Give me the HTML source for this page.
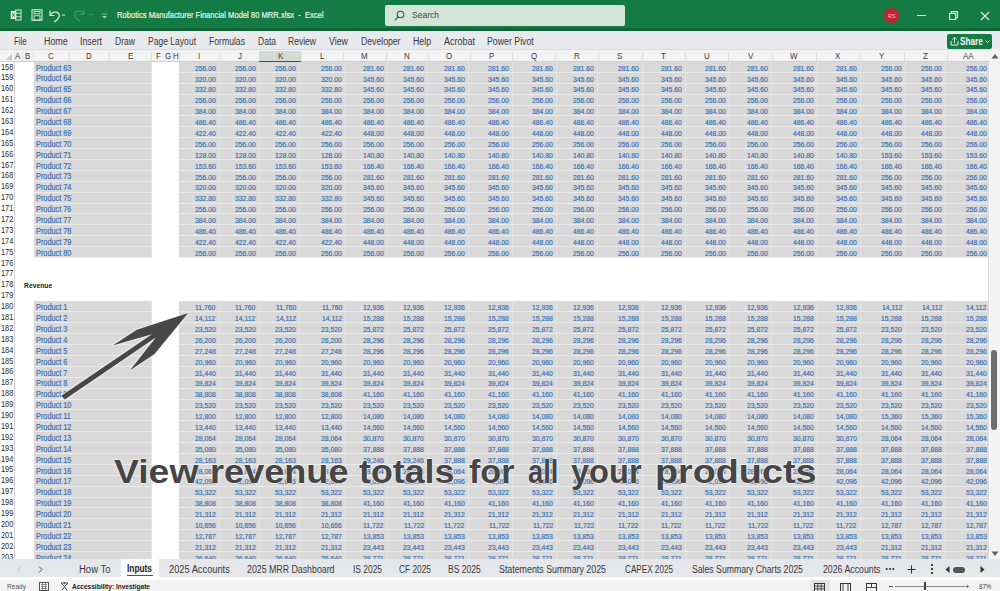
<!DOCTYPE html><html><head><meta charset="utf-8"><title>Excel</title><style>
*{margin:0;padding:0;box-sizing:border-box}
html,body{width:1000px;height:591px;overflow:hidden;background:#fff}
body{position:relative;font-family:"Liberation Sans",sans-serif;color:#222}
.a{position:absolute}
.tx{white-space:nowrap;transform-origin:0 0}
.big{text-shadow:1px 0 0 rgba(255,255,255,.5),-1px 0 0 rgba(255,255,255,.5),0 1px 0 rgba(255,255,255,.5),0 -1px 0 rgba(255,255,255,.5)}
.cv{-webkit-text-stroke:0.18px #386fb5}
#title{left:0;top:0;width:1000px;height:30px;background:#137b43}
#title2{left:0;top:28px;width:1000px;height:2.5px;background:#0f6535}
#ribbon{left:0;top:30.5px;width:1000px;height:18.5px;background:#e9eaee}
.tab{top:36px;font-size:10px;color:#333;white-space:nowrap}
#hdrbg{left:0;top:49px;width:990px;height:12.5px;background:#f3f3f3;border-top:1.5px solid #dcdcdc;border-bottom:1px solid #cfcfcf}
.ch{top:51.5px;height:10px;font-size:8.5px;line-height:10px;text-align:center;color:#444}
.cs{top:52px;width:1px;height:9px;background:#e2e2e2}
.rn{left:0;width:13.5px;font-size:7.8px;text-align:right;color:#333;letter-spacing:-0.2px}
#rhline{left:14px;top:61.5px;width:1px;height:498px;background:#d4d4d4}
.blk{background:#d9d9d9}
.hl{height:1px;background:#ebebeb}
.vl{width:1px;background:#e4e4e4}
.v{font-size:7px;color:#2f68b2;text-align:right;white-space:nowrap;line-height:10.9px;height:10.9px}
.p{font-size:7.4px;color:#2f68b2;white-space:nowrap;line-height:10.9px;height:10.9px}
#tabbar{left:0;top:559px;width:1000px;height:18px;background:#e5e7eb;border-bottom:3px solid #e9e9ea}
#status{left:0;top:580px;width:1000px;height:11px;background:#f3f3f3}
.st{top:562.5px;font-size:10px;color:#333;white-space:nowrap}
#vscroll{left:990px;top:49px;width:10px;height:510px;background:#f3f3f3}
#vline{left:988px;top:61.5px;width:1px;height:498px;background:#dcdcdc}
</style></head><body>
<div id="title" class="a"></div><div id="title2" class="a"></div>
<svg class="a" style="left:10px;top:9px" width="12" height="12" viewBox="0 0 12 12"><rect x="5.6" y="1" width="5.4" height="10" fill="none" stroke="#d2efdc" stroke-width="1"/><line x1="5.6" y1="4.3" x2="11" y2="4.3" stroke="#d2efdc" stroke-width="0.9"/><line x1="5.6" y1="7.7" x2="11" y2="7.7" stroke="#d2efdc" stroke-width="0.9"/><rect x="0.7" y="2" width="5.6" height="8" fill="#d8f2e0"/><path d="M2.3 4.3 L4.7 7.7 M4.7 4.3 L2.3 7.7" stroke="#2a5a3c" stroke-width="0.9"/></svg>
<svg class="a" style="left:30.5px;top:9px" width="12" height="12" viewBox="0 0 12 12"><rect x="1" y="0.8" width="10" height="10.4" fill="none" stroke="#d2efdc" stroke-width="1.1"/><rect x="3" y="2.6" width="6" height="2.2" fill="none" stroke="#d2efdc" stroke-width="0.9"/><rect x="3" y="6.8" width="6" height="4.4" fill="none" stroke="#d2efdc" stroke-width="0.9"/><rect x="4.6" y="7.8" width="2.2" height="2" fill="#2a5a3c"/></svg>
<svg class="a" style="left:49px;top:8.5px" width="16" height="14" viewBox="0 0 16 14"><path d="M1 1.5 L1 6.5 L5.5 6.5" fill="none" stroke="#d2efdc" stroke-width="1.2"/><path d="M1.3 6.2 C3 2.5 8.5 2 10 5 C11.2 7.5 9 11 5 13" fill="none" stroke="#d2efdc" stroke-width="1.3"/><line x1="13" y1="6" x2="16" y2="6" stroke="#d2efdc" stroke-width="1.1"/></svg>
<svg class="a" style="left:73px;top:8px" width="22" height="14" viewBox="0 0 22 14"><path d="M11 1.5 L11 6.5 L6.5 6.5" fill="none" stroke="#3f9863" stroke-width="1.2"/><path d="M10.7 6.2 C9 2.5 3.5 2 2 5 C0.8 7.5 3 11 7 13" fill="none" stroke="#3f9863" stroke-width="1.3"/><line x1="16" y1="6.5" x2="20" y2="6.5" stroke="#3f9863" stroke-width="1.1"/></svg>
<svg class="a" style="left:101px;top:12.5px" width="7" height="6" viewBox="0 0 7 6"><line x1="0.5" y1="1" x2="6.5" y2="1" stroke="#6fc08e" stroke-width="1"/><path d="M1 3 L6 3 L3.5 5.5 Z" fill="#8fdcac"/></svg>
<div class="a tx " style="left:117.20px;top:10.27px;font-size:9.20px;line-height:10.28px;color:#e6f6ec;transform:scaleX(0.8272);white-space:pre;-webkit-text-stroke:0.2px #e6f6ec">Robotics Manufacturer Financial Model 80 MRR.xlsx  -  Excel</div>
<div class="a" style="left:385px;top:5px;width:240px;height:20.5px;background:#d3e4d9;border-radius:2px"></div>
<svg class="a" style="left:394px;top:10px" width="11" height="11" viewBox="0 0 11 11"><circle cx="6.5" cy="4.5" r="3.3" fill="none" stroke="#3d5d48" stroke-width="1.1"/><line x1="4.2" y1="6.8" x2="1" y2="10" stroke="#3d5d48" stroke-width="1.2"/></svg>
<div class="a tx " style="left:412.00px;top:9.90px;font-size:9.50px;line-height:10.61px;color:#3b4a40;transform:scaleX(0.8966)">Search</div>
<div class="a" style="left:883.5px;top:7.5px;width:15.5px;height:15.5px;border-radius:50%;background:#c6212f"></div>
<div class="a tx " style="left:887.50px;top:13.02px;font-size:5.50px;line-height:6.14px;color:#f0c8cc;transform:scaleX(0.9810)">RS</div>
<div class="a" style="left:916.5px;top:14.6px;width:9.5px;height:1px;background:#e4f0e8"></div>
<svg class="a" style="left:949px;top:11px" width="9" height="9" viewBox="0 0 9 9"><rect x="0.6" y="2.4" width="6" height="6" fill="none" stroke="#e4f0e8" stroke-width="1.1"/><path d="M2.4 2.4 L2.4 0.6 L8.4 0.6 L8.4 6.6 L6.6 6.6" fill="none" stroke="#e4f0e8" stroke-width="1.1"/></svg>
<svg class="a" style="left:980px;top:10.5px" width="10" height="10" viewBox="0 0 10 10"><path d="M1 1 L9 9 M9 1 L1 9" stroke="#e4f0e8" stroke-width="1.2"/></svg>
<div id="ribbon" class="a"></div>
<div class="a tx " style="left:14.20px;top:35.65px;font-size:10.00px;line-height:11.17px;color:#383838;transform:scaleX(0.7826)">File</div>
<div class="a tx " style="left:43.60px;top:35.65px;font-size:10.00px;line-height:11.17px;color:#383838;transform:scaleX(0.8876)">Home</div>
<div class="a tx " style="left:80.00px;top:35.65px;font-size:10.00px;line-height:11.17px;color:#383838;transform:scaleX(0.8800)">Insert</div>
<div class="a tx " style="left:115.00px;top:35.65px;font-size:10.00px;line-height:11.17px;color:#383838;transform:scaleX(0.8565)">Draw</div>
<div class="a tx " style="left:148.00px;top:35.65px;font-size:10.00px;line-height:11.17px;color:#383838;transform:scaleX(0.8549)">Page Layout</div>
<div class="a tx " style="left:209.00px;top:35.65px;font-size:10.00px;line-height:11.17px;color:#383838;transform:scaleX(0.8633)">Formulas</div>
<div class="a tx " style="left:257.50px;top:35.65px;font-size:10.00px;line-height:11.17px;color:#383838;transform:scaleX(0.8511)">Data</div>
<div class="a tx " style="left:288.00px;top:35.65px;font-size:10.00px;line-height:11.17px;color:#383838;transform:scaleX(0.8537)">Review</div>
<div class="a tx " style="left:328.70px;top:35.65px;font-size:10.00px;line-height:11.17px;color:#383838;transform:scaleX(0.8791)">View</div>
<div class="a tx " style="left:360.50px;top:35.65px;font-size:10.00px;line-height:11.17px;color:#383838;transform:scaleX(0.8662)">Developer</div>
<div class="a tx " style="left:412.80px;top:35.65px;font-size:10.00px;line-height:11.17px;color:#383838;transform:scaleX(0.8759)">Help</div>
<div class="a tx " style="left:443.70px;top:35.65px;font-size:10.00px;line-height:11.17px;color:#383838;transform:scaleX(0.8970)">Acrobat</div>
<div class="a tx " style="left:487.00px;top:35.65px;font-size:10.00px;line-height:11.17px;color:#383838;transform:scaleX(0.8772)">Power Pivot</div>
<div class="a" style="left:947px;top:33.5px;width:45px;height:15px;background:#137b43;border-radius:2px"></div>
<svg class="a" style="left:950px;top:36px" width="9" height="10" viewBox="0 0 9 10"><path d="M1 5 L1 9 L8 9 L8 5" fill="none" stroke="#e8f3ec" stroke-width="1"/><path d="M4.5 7 L4.5 1.5 M2.5 3.5 L4.5 1.2 L6.5 3.5" fill="none" stroke="#e8f3ec" stroke-width="1"/></svg>
<div class="a tx " style="left:960.00px;top:35.75px;font-size:10.00px;line-height:11.17px;color:#f2f8f4;transform:scaleX(0.8240);font-weight:600">Share</div>
<svg class="a" style="left:985px;top:40px" width="5" height="3" viewBox="0 0 5 3"><path d="M0.5 0.5 L2.5 2.5 L4.5 0.5" fill="none" stroke="#e8f3ec" stroke-width="0.9"/></svg>
<div id="hdrbg" class="a"></div>
<svg class="a" style="left:5px;top:53px" width="8" height="8" viewBox="0 0 8 8"><path d="M7 1 L7 7 L1 7 Z" fill="#c8c8c8"/></svg>
<div class="a cs" style="left:21.5px"></div>
<div class="a tx " style="left:15.33px;top:51.70px;font-size:8.40px;line-height:9.38px;color:#3c3c3c;transform:scaleX(0.9500)">A</div>
<div class="a cs" style="left:32.5px"></div>
<div class="a tx " style="left:24.85px;top:51.70px;font-size:8.40px;line-height:9.38px;color:#3c3c3c;transform:scaleX(0.9500)">B</div>
<div class="a cs" style="left:68.5px"></div>
<div class="a tx " style="left:48.13px;top:51.70px;font-size:8.40px;line-height:9.38px;color:#3c3c3c;transform:scaleX(0.9500)">C</div>
<div class="a cs" style="left:109px"></div>
<div class="a tx " style="left:86.38px;top:51.70px;font-size:8.40px;line-height:9.38px;color:#3c3c3c;transform:scaleX(0.9500)">D</div>
<div class="a cs" style="left:150.5px"></div>
<div class="a tx " style="left:127.60px;top:51.70px;font-size:8.40px;line-height:9.38px;color:#3c3c3c;transform:scaleX(0.9500)">E</div>
<div class="a cs" style="left:164.5px"></div>
<div class="a tx " style="left:155.57px;top:51.70px;font-size:8.40px;line-height:9.38px;color:#3c3c3c;transform:scaleX(0.9500)">F</div>
<div class="a cs" style="left:171.5px"></div>
<div class="a tx " style="left:165.39px;top:51.70px;font-size:8.40px;line-height:9.38px;color:#3c3c3c;transform:scaleX(0.9500)">G</div>
<div class="a cs" style="left:178.5px"></div>
<div class="a tx " style="left:172.63px;top:51.70px;font-size:8.40px;line-height:9.38px;color:#3c3c3c;transform:scaleX(0.9500)">H</div>
<div class="a cs" style="left:219px"></div>
<div class="a tx " style="left:198.13px;top:51.70px;font-size:8.40px;line-height:9.38px;color:#3c3c3c;transform:scaleX(0.9500)">I</div>
<div class="a cs" style="left:259.5px"></div>
<div class="a tx " style="left:237.75px;top:51.70px;font-size:8.40px;line-height:9.38px;color:#3c3c3c;transform:scaleX(0.9500)">J</div>
<div class="a" style="left:258.5px;top:50.5px;width:42.5px;height:11px;background:#d2dbd4"></div>
<div class="a" style="left:258.5px;top:60.6px;width:42.5px;height:1.4px;background:#2b5a3f"></div>
<div class="a cs" style="left:300.5px"></div>
<div class="a tx " style="left:277.85px;top:51.70px;font-size:8.40px;line-height:9.38px;color:#3c3c3c;transform:scaleX(0.9500)">K</div>
<div class="a cs" style="left:343px"></div>
<div class="a tx " style="left:320.04px;top:51.70px;font-size:8.40px;line-height:9.38px;color:#3c3c3c;transform:scaleX(0.9500)">L</div>
<div class="a cs" style="left:385.5px"></div>
<div class="a tx " style="left:361.42px;top:51.70px;font-size:8.40px;line-height:9.38px;color:#3c3c3c;transform:scaleX(0.9500)">M</div>
<div class="a cs" style="left:427.5px"></div>
<div class="a tx " style="left:404.13px;top:51.70px;font-size:8.40px;line-height:9.38px;color:#3c3c3c;transform:scaleX(0.9500)">N</div>
<div class="a cs" style="left:469.5px"></div>
<div class="a tx " style="left:445.89px;top:51.70px;font-size:8.40px;line-height:9.38px;color:#3c3c3c;transform:scaleX(0.9500)">O</div>
<div class="a cs" style="left:512px"></div>
<div class="a tx " style="left:488.60px;top:51.70px;font-size:8.40px;line-height:9.38px;color:#3c3c3c;transform:scaleX(0.9500)">P</div>
<div class="a cs" style="left:554.5px"></div>
<div class="a tx " style="left:530.64px;top:51.70px;font-size:8.40px;line-height:9.38px;color:#3c3c3c;transform:scaleX(0.9500)">Q</div>
<div class="a cs" style="left:597.5px"></div>
<div class="a tx " style="left:573.63px;top:51.70px;font-size:8.40px;line-height:9.38px;color:#3c3c3c;transform:scaleX(0.9500)">R</div>
<div class="a cs" style="left:641.5px"></div>
<div class="a tx " style="left:617.35px;top:51.70px;font-size:8.40px;line-height:9.38px;color:#3c3c3c;transform:scaleX(0.9500)">S</div>
<div class="a cs" style="left:685px"></div>
<div class="a tx " style="left:661.32px;top:51.70px;font-size:8.40px;line-height:9.38px;color:#3c3c3c;transform:scaleX(0.9500)">T</div>
<div class="a cs" style="left:728px"></div>
<div class="a tx " style="left:704.13px;top:51.70px;font-size:8.40px;line-height:9.38px;color:#3c3c3c;transform:scaleX(0.9500)">U</div>
<div class="a cs" style="left:771.5px"></div>
<div class="a tx " style="left:747.60px;top:51.70px;font-size:8.40px;line-height:9.38px;color:#3c3c3c;transform:scaleX(0.9500)">V</div>
<div class="a cs" style="left:815.5px"></div>
<div class="a tx " style="left:790.23px;top:51.70px;font-size:8.40px;line-height:9.38px;color:#3c3c3c;transform:scaleX(0.9500)">W</div>
<div class="a cs" style="left:859.5px"></div>
<div class="a tx " style="left:835.35px;top:51.70px;font-size:8.40px;line-height:9.38px;color:#3c3c3c;transform:scaleX(0.9500)">X</div>
<div class="a cs" style="left:903.5px"></div>
<div class="a tx " style="left:879.35px;top:51.70px;font-size:8.40px;line-height:9.38px;color:#3c3c3c;transform:scaleX(0.9500)">Y</div>
<div class="a cs" style="left:946.5px"></div>
<div class="a tx " style="left:923.07px;top:51.70px;font-size:8.40px;line-height:9.38px;color:#3c3c3c;transform:scaleX(0.9500)">Z</div>
<div class="a cs" style="left:989.5px"></div>
<div class="a tx " style="left:963.17px;top:51.70px;font-size:8.40px;line-height:9.38px;color:#3c3c3c;transform:scaleX(0.9500)">AA</div>
<div class="a cs" style="left:14px"></div>
<div id="vscroll" class="a"></div><div id="vline" class="a"></div>
<svg class="a" style="left:991px;top:53px" width="8" height="6" viewBox="0 0 8 6"><path d="M0.5 5.5 L4 1 L7.5 5.5 Z" fill="#606060"/></svg>
<svg class="a" style="left:991px;top:551px" width="8" height="6" viewBox="0 0 8 6"><path d="M0.5 0.5 L4 5 L7.5 0.5 Z" fill="#606060"/></svg>
<div class="a" style="left:991px;top:350px;width:6px;height:80px;border-radius:3px;background:#6e6e6e"></div>
<div id="rhline" class="a"></div>
<div class="a tx " style="left:0.85px;top:62.52px;font-size:8.60px;line-height:9.61px;color:#2a2a2a;transform:scaleX(0.8600)">158</div>
<div class="a tx " style="left:0.85px;top:73.41px;font-size:8.60px;line-height:9.61px;color:#2a2a2a;transform:scaleX(0.8600)">159</div>
<div class="a tx " style="left:0.85px;top:84.30px;font-size:8.60px;line-height:9.61px;color:#2a2a2a;transform:scaleX(0.8600)">160</div>
<div class="a tx " style="left:0.85px;top:95.19px;font-size:8.60px;line-height:9.61px;color:#2a2a2a;transform:scaleX(0.8600)">161</div>
<div class="a tx " style="left:0.85px;top:106.08px;font-size:8.60px;line-height:9.61px;color:#2a2a2a;transform:scaleX(0.8600)">162</div>
<div class="a tx " style="left:0.85px;top:116.97px;font-size:8.60px;line-height:9.61px;color:#2a2a2a;transform:scaleX(0.8600)">163</div>
<div class="a tx " style="left:0.85px;top:127.86px;font-size:8.60px;line-height:9.61px;color:#2a2a2a;transform:scaleX(0.8600)">164</div>
<div class="a tx " style="left:0.85px;top:138.75px;font-size:8.60px;line-height:9.61px;color:#2a2a2a;transform:scaleX(0.8600)">165</div>
<div class="a tx " style="left:0.85px;top:149.64px;font-size:8.60px;line-height:9.61px;color:#2a2a2a;transform:scaleX(0.8600)">166</div>
<div class="a tx " style="left:0.85px;top:160.53px;font-size:8.60px;line-height:9.61px;color:#2a2a2a;transform:scaleX(0.8600)">167</div>
<div class="a tx " style="left:0.85px;top:171.42px;font-size:8.60px;line-height:9.61px;color:#2a2a2a;transform:scaleX(0.8600)">168</div>
<div class="a tx " style="left:0.85px;top:182.31px;font-size:8.60px;line-height:9.61px;color:#2a2a2a;transform:scaleX(0.8600)">169</div>
<div class="a tx " style="left:0.85px;top:193.20px;font-size:8.60px;line-height:9.61px;color:#2a2a2a;transform:scaleX(0.8600)">170</div>
<div class="a tx " style="left:0.85px;top:204.09px;font-size:8.60px;line-height:9.61px;color:#2a2a2a;transform:scaleX(0.8600)">171</div>
<div class="a tx " style="left:0.85px;top:214.98px;font-size:8.60px;line-height:9.61px;color:#2a2a2a;transform:scaleX(0.8600)">172</div>
<div class="a tx " style="left:0.85px;top:225.87px;font-size:8.60px;line-height:9.61px;color:#2a2a2a;transform:scaleX(0.8600)">173</div>
<div class="a tx " style="left:0.85px;top:236.76px;font-size:8.60px;line-height:9.61px;color:#2a2a2a;transform:scaleX(0.8600)">174</div>
<div class="a tx " style="left:0.85px;top:247.65px;font-size:8.60px;line-height:9.61px;color:#2a2a2a;transform:scaleX(0.8600)">175</div>
<div class="a tx " style="left:0.85px;top:258.54px;font-size:8.60px;line-height:9.61px;color:#2a2a2a;transform:scaleX(0.8600)">176</div>
<div class="a tx " style="left:0.85px;top:269.43px;font-size:8.60px;line-height:9.61px;color:#2a2a2a;transform:scaleX(0.8600)">177</div>
<div class="a tx " style="left:0.85px;top:280.32px;font-size:8.60px;line-height:9.61px;color:#2a2a2a;transform:scaleX(0.8600)">178</div>
<div class="a tx " style="left:0.85px;top:291.21px;font-size:8.60px;line-height:9.61px;color:#2a2a2a;transform:scaleX(0.8600)">179</div>
<div class="a tx " style="left:0.85px;top:302.10px;font-size:8.60px;line-height:9.61px;color:#2a2a2a;transform:scaleX(0.8600)">180</div>
<div class="a tx " style="left:0.85px;top:312.99px;font-size:8.60px;line-height:9.61px;color:#2a2a2a;transform:scaleX(0.8600)">181</div>
<div class="a tx " style="left:0.85px;top:323.88px;font-size:8.60px;line-height:9.61px;color:#2a2a2a;transform:scaleX(0.8600)">182</div>
<div class="a tx " style="left:0.85px;top:334.77px;font-size:8.60px;line-height:9.61px;color:#2a2a2a;transform:scaleX(0.8600)">183</div>
<div class="a tx " style="left:0.85px;top:345.66px;font-size:8.60px;line-height:9.61px;color:#2a2a2a;transform:scaleX(0.8600)">184</div>
<div class="a tx " style="left:0.85px;top:356.55px;font-size:8.60px;line-height:9.61px;color:#2a2a2a;transform:scaleX(0.8600)">185</div>
<div class="a tx " style="left:0.85px;top:367.44px;font-size:8.60px;line-height:9.61px;color:#2a2a2a;transform:scaleX(0.8600)">186</div>
<div class="a tx " style="left:0.85px;top:378.33px;font-size:8.60px;line-height:9.61px;color:#2a2a2a;transform:scaleX(0.8600)">187</div>
<div class="a tx " style="left:0.85px;top:389.22px;font-size:8.60px;line-height:9.61px;color:#2a2a2a;transform:scaleX(0.8600)">188</div>
<div class="a tx " style="left:0.85px;top:400.11px;font-size:8.60px;line-height:9.61px;color:#2a2a2a;transform:scaleX(0.8600)">189</div>
<div class="a tx " style="left:0.85px;top:411.00px;font-size:8.60px;line-height:9.61px;color:#2a2a2a;transform:scaleX(0.8600)">190</div>
<div class="a tx " style="left:0.85px;top:421.89px;font-size:8.60px;line-height:9.61px;color:#2a2a2a;transform:scaleX(0.8600)">191</div>
<div class="a tx " style="left:0.85px;top:432.78px;font-size:8.60px;line-height:9.61px;color:#2a2a2a;transform:scaleX(0.8600)">192</div>
<div class="a tx " style="left:0.85px;top:443.67px;font-size:8.60px;line-height:9.61px;color:#2a2a2a;transform:scaleX(0.8600)">193</div>
<div class="a tx " style="left:0.85px;top:454.56px;font-size:8.60px;line-height:9.61px;color:#2a2a2a;transform:scaleX(0.8600)">194</div>
<div class="a tx " style="left:0.85px;top:465.45px;font-size:8.60px;line-height:9.61px;color:#2a2a2a;transform:scaleX(0.8600)">195</div>
<div class="a tx " style="left:0.85px;top:476.34px;font-size:8.60px;line-height:9.61px;color:#2a2a2a;transform:scaleX(0.8600)">196</div>
<div class="a tx " style="left:0.85px;top:487.23px;font-size:8.60px;line-height:9.61px;color:#2a2a2a;transform:scaleX(0.8600)">197</div>
<div class="a tx " style="left:0.85px;top:498.12px;font-size:8.60px;line-height:9.61px;color:#2a2a2a;transform:scaleX(0.8600)">198</div>
<div class="a tx " style="left:0.85px;top:509.01px;font-size:8.60px;line-height:9.61px;color:#2a2a2a;transform:scaleX(0.8600)">199</div>
<div class="a tx " style="left:0.85px;top:519.90px;font-size:8.60px;line-height:9.61px;color:#2a2a2a;transform:scaleX(0.8600)">200</div>
<div class="a tx " style="left:0.85px;top:530.79px;font-size:8.60px;line-height:9.61px;color:#2a2a2a;transform:scaleX(0.8600)">201</div>
<div class="a tx " style="left:0.85px;top:541.68px;font-size:8.60px;line-height:9.61px;color:#2a2a2a;transform:scaleX(0.8600)">202</div>
<div class="a tx " style="left:0.85px;top:552.57px;font-size:8.60px;line-height:9.61px;color:#2a2a2a;transform:scaleX(0.8600)">203</div>
<div class="a blk" style="left:34px;top:61.5px;width:116.6px;height:196.02px"></div>
<div class="a hl" style="left:34px;top:71.89px;width:116.6px"></div>
<div class="a hl" style="left:34px;top:82.78px;width:116.6px"></div>
<div class="a hl" style="left:34px;top:93.67px;width:116.6px"></div>
<div class="a hl" style="left:34px;top:104.56px;width:116.6px"></div>
<div class="a hl" style="left:34px;top:115.45px;width:116.6px"></div>
<div class="a hl" style="left:34px;top:126.34px;width:116.6px"></div>
<div class="a hl" style="left:34px;top:137.23px;width:116.6px"></div>
<div class="a hl" style="left:34px;top:148.12px;width:116.6px"></div>
<div class="a hl" style="left:34px;top:159.01px;width:116.6px"></div>
<div class="a hl" style="left:34px;top:169.9px;width:116.6px"></div>
<div class="a hl" style="left:34px;top:180.79px;width:116.6px"></div>
<div class="a hl" style="left:34px;top:191.68px;width:116.6px"></div>
<div class="a hl" style="left:34px;top:202.57px;width:116.6px"></div>
<div class="a hl" style="left:34px;top:213.46px;width:116.6px"></div>
<div class="a hl" style="left:34px;top:224.35px;width:116.6px"></div>
<div class="a hl" style="left:34px;top:235.24px;width:116.6px"></div>
<div class="a hl" style="left:34px;top:246.13px;width:116.6px"></div>
<div class="a hl" style="left:34px;top:257.02px;width:116.6px"></div>
<div class="a vl" style="left:150.5px;top:61.5px;height:196.02px"></div>
<div class="a blk" style="left:179px;top:61.5px;width:809px;height:196.02px"></div>
<div class="a hl" style="left:179px;top:71.89px;width:809px"></div>
<div class="a hl" style="left:179px;top:82.78px;width:809px"></div>
<div class="a hl" style="left:179px;top:93.67px;width:809px"></div>
<div class="a hl" style="left:179px;top:104.56px;width:809px"></div>
<div class="a hl" style="left:179px;top:115.45px;width:809px"></div>
<div class="a hl" style="left:179px;top:126.34px;width:809px"></div>
<div class="a hl" style="left:179px;top:137.23px;width:809px"></div>
<div class="a hl" style="left:179px;top:148.12px;width:809px"></div>
<div class="a hl" style="left:179px;top:159.01px;width:809px"></div>
<div class="a hl" style="left:179px;top:169.9px;width:809px"></div>
<div class="a hl" style="left:179px;top:180.79px;width:809px"></div>
<div class="a hl" style="left:179px;top:191.68px;width:809px"></div>
<div class="a hl" style="left:179px;top:202.57px;width:809px"></div>
<div class="a hl" style="left:179px;top:213.46px;width:809px"></div>
<div class="a hl" style="left:179px;top:224.35px;width:809px"></div>
<div class="a hl" style="left:179px;top:235.24px;width:809px"></div>
<div class="a hl" style="left:179px;top:246.13px;width:809px"></div>
<div class="a hl" style="left:179px;top:257.02px;width:809px"></div>
<div class="a vl" style="left:218.5px;top:61.5px;height:196.02px"></div>
<div class="a vl" style="left:258.8px;top:61.5px;height:196.02px"></div>
<div class="a vl" style="left:299.3px;top:61.5px;height:196.02px"></div>
<div class="a vl" style="left:345px;top:61.5px;height:196.02px"></div>
<div class="a vl" style="left:386.7px;top:61.5px;height:196.02px"></div>
<div class="a vl" style="left:427.4px;top:61.5px;height:196.02px"></div>
<div class="a vl" style="left:467.8px;top:61.5px;height:196.02px"></div>
<div class="a vl" style="left:512.2px;top:61.5px;height:196.02px"></div>
<div class="a vl" style="left:556px;top:61.5px;height:196.02px"></div>
<div class="a vl" style="left:597px;top:61.5px;height:196.02px"></div>
<div class="a vl" style="left:641.8px;top:61.5px;height:196.02px"></div>
<div class="a vl" style="left:684.5px;top:61.5px;height:196.02px"></div>
<div class="a vl" style="left:728.8px;top:61.5px;height:196.02px"></div>
<div class="a vl" style="left:771px;top:61.5px;height:196.02px"></div>
<div class="a vl" style="left:816.8px;top:61.5px;height:196.02px"></div>
<div class="a vl" style="left:859.6px;top:61.5px;height:196.02px"></div>
<div class="a vl" style="left:905px;top:61.5px;height:196.02px"></div>
<div class="a vl" style="left:945.3px;top:61.5px;height:196.02px"></div>
<div class="a blk" style="left:34px;top:301.08px;width:116.6px;height:261.36px"></div>
<div class="a hl" style="left:34px;top:311.47px;width:116.6px"></div>
<div class="a hl" style="left:34px;top:322.36px;width:116.6px"></div>
<div class="a hl" style="left:34px;top:333.25px;width:116.6px"></div>
<div class="a hl" style="left:34px;top:344.14px;width:116.6px"></div>
<div class="a hl" style="left:34px;top:355.03px;width:116.6px"></div>
<div class="a hl" style="left:34px;top:365.92px;width:116.6px"></div>
<div class="a hl" style="left:34px;top:376.81px;width:116.6px"></div>
<div class="a hl" style="left:34px;top:387.7px;width:116.6px"></div>
<div class="a hl" style="left:34px;top:398.59px;width:116.6px"></div>
<div class="a hl" style="left:34px;top:409.48px;width:116.6px"></div>
<div class="a hl" style="left:34px;top:420.37px;width:116.6px"></div>
<div class="a hl" style="left:34px;top:431.26px;width:116.6px"></div>
<div class="a hl" style="left:34px;top:442.15px;width:116.6px"></div>
<div class="a hl" style="left:34px;top:453.04px;width:116.6px"></div>
<div class="a hl" style="left:34px;top:463.93px;width:116.6px"></div>
<div class="a hl" style="left:34px;top:474.82px;width:116.6px"></div>
<div class="a hl" style="left:34px;top:485.71px;width:116.6px"></div>
<div class="a hl" style="left:34px;top:496.6px;width:116.6px"></div>
<div class="a hl" style="left:34px;top:507.49px;width:116.6px"></div>
<div class="a hl" style="left:34px;top:518.38px;width:116.6px"></div>
<div class="a hl" style="left:34px;top:529.27px;width:116.6px"></div>
<div class="a hl" style="left:34px;top:540.16px;width:116.6px"></div>
<div class="a hl" style="left:34px;top:551.05px;width:116.6px"></div>
<div class="a hl" style="left:34px;top:561.94px;width:116.6px"></div>
<div class="a vl" style="left:150.5px;top:301.08px;height:261.36px"></div>
<div class="a blk" style="left:179px;top:301.08px;width:809px;height:261.36px"></div>
<div class="a hl" style="left:179px;top:311.47px;width:809px"></div>
<div class="a hl" style="left:179px;top:322.36px;width:809px"></div>
<div class="a hl" style="left:179px;top:333.25px;width:809px"></div>
<div class="a hl" style="left:179px;top:344.14px;width:809px"></div>
<div class="a hl" style="left:179px;top:355.03px;width:809px"></div>
<div class="a hl" style="left:179px;top:365.92px;width:809px"></div>
<div class="a hl" style="left:179px;top:376.81px;width:809px"></div>
<div class="a hl" style="left:179px;top:387.7px;width:809px"></div>
<div class="a hl" style="left:179px;top:398.59px;width:809px"></div>
<div class="a hl" style="left:179px;top:409.48px;width:809px"></div>
<div class="a hl" style="left:179px;top:420.37px;width:809px"></div>
<div class="a hl" style="left:179px;top:431.26px;width:809px"></div>
<div class="a hl" style="left:179px;top:442.15px;width:809px"></div>
<div class="a hl" style="left:179px;top:453.04px;width:809px"></div>
<div class="a hl" style="left:179px;top:463.93px;width:809px"></div>
<div class="a hl" style="left:179px;top:474.82px;width:809px"></div>
<div class="a hl" style="left:179px;top:485.71px;width:809px"></div>
<div class="a hl" style="left:179px;top:496.6px;width:809px"></div>
<div class="a hl" style="left:179px;top:507.49px;width:809px"></div>
<div class="a hl" style="left:179px;top:518.38px;width:809px"></div>
<div class="a hl" style="left:179px;top:529.27px;width:809px"></div>
<div class="a hl" style="left:179px;top:540.16px;width:809px"></div>
<div class="a hl" style="left:179px;top:551.05px;width:809px"></div>
<div class="a hl" style="left:179px;top:561.94px;width:809px"></div>
<div class="a vl" style="left:218.5px;top:301.08px;height:261.36px"></div>
<div class="a vl" style="left:258.8px;top:301.08px;height:261.36px"></div>
<div class="a vl" style="left:299.3px;top:301.08px;height:261.36px"></div>
<div class="a vl" style="left:345px;top:301.08px;height:261.36px"></div>
<div class="a vl" style="left:386.7px;top:301.08px;height:261.36px"></div>
<div class="a vl" style="left:427.4px;top:301.08px;height:261.36px"></div>
<div class="a vl" style="left:467.8px;top:301.08px;height:261.36px"></div>
<div class="a vl" style="left:512.2px;top:301.08px;height:261.36px"></div>
<div class="a vl" style="left:556px;top:301.08px;height:261.36px"></div>
<div class="a vl" style="left:597px;top:301.08px;height:261.36px"></div>
<div class="a vl" style="left:641.8px;top:301.08px;height:261.36px"></div>
<div class="a vl" style="left:684.5px;top:301.08px;height:261.36px"></div>
<div class="a vl" style="left:728.8px;top:301.08px;height:261.36px"></div>
<div class="a vl" style="left:771px;top:301.08px;height:261.36px"></div>
<div class="a vl" style="left:816.8px;top:301.08px;height:261.36px"></div>
<div class="a vl" style="left:859.6px;top:301.08px;height:261.36px"></div>
<div class="a vl" style="left:905px;top:301.08px;height:261.36px"></div>
<div class="a vl" style="left:945.3px;top:301.08px;height:261.36px"></div>
<div class="a tx cv" style="left:36.00px;top:63.58px;font-size:8.20px;line-height:9.16px;color:#386fb5;transform:scaleX(0.8944)">Product 63</div>
<div class="a tx cv" style="left:194.56px;top:63.67px;font-size:8.10px;line-height:9.05px;color:#386fb5;transform:scaleX(0.8450)">256.00</div>
<div class="a tx cv" style="left:234.86px;top:63.67px;font-size:8.10px;line-height:9.05px;color:#386fb5;transform:scaleX(0.8450)">256.00</div>
<div class="a tx cv" style="left:275.36px;top:63.67px;font-size:8.10px;line-height:9.05px;color:#386fb5;transform:scaleX(0.8450)">256.00</div>
<div class="a tx cv" style="left:321.06px;top:63.67px;font-size:8.10px;line-height:9.05px;color:#386fb5;transform:scaleX(0.8450)">256.00</div>
<div class="a tx cv" style="left:362.76px;top:63.67px;font-size:8.10px;line-height:9.05px;color:#386fb5;transform:scaleX(0.8450)">281.60</div>
<div class="a tx cv" style="left:403.46px;top:63.67px;font-size:8.10px;line-height:9.05px;color:#386fb5;transform:scaleX(0.8450)">281.60</div>
<div class="a tx cv" style="left:443.86px;top:63.67px;font-size:8.10px;line-height:9.05px;color:#386fb5;transform:scaleX(0.8450)">281.60</div>
<div class="a tx cv" style="left:488.26px;top:63.67px;font-size:8.10px;line-height:9.05px;color:#386fb5;transform:scaleX(0.8450)">281.60</div>
<div class="a tx cv" style="left:532.06px;top:63.67px;font-size:8.10px;line-height:9.05px;color:#386fb5;transform:scaleX(0.8450)">281.60</div>
<div class="a tx cv" style="left:573.06px;top:63.67px;font-size:8.10px;line-height:9.05px;color:#386fb5;transform:scaleX(0.8450)">281.60</div>
<div class="a tx cv" style="left:617.86px;top:63.67px;font-size:8.10px;line-height:9.05px;color:#386fb5;transform:scaleX(0.8450)">281.60</div>
<div class="a tx cv" style="left:660.56px;top:63.67px;font-size:8.10px;line-height:9.05px;color:#386fb5;transform:scaleX(0.8450)">281.60</div>
<div class="a tx cv" style="left:704.86px;top:63.67px;font-size:8.10px;line-height:9.05px;color:#386fb5;transform:scaleX(0.8450)">281.60</div>
<div class="a tx cv" style="left:747.06px;top:63.67px;font-size:8.10px;line-height:9.05px;color:#386fb5;transform:scaleX(0.8450)">281.60</div>
<div class="a tx cv" style="left:792.86px;top:63.67px;font-size:8.10px;line-height:9.05px;color:#386fb5;transform:scaleX(0.8450)">281.60</div>
<div class="a tx cv" style="left:835.66px;top:63.67px;font-size:8.10px;line-height:9.05px;color:#386fb5;transform:scaleX(0.8450)">281.60</div>
<div class="a tx cv" style="left:881.06px;top:63.67px;font-size:8.10px;line-height:9.05px;color:#386fb5;transform:scaleX(0.8450)">256.00</div>
<div class="a tx cv" style="left:921.36px;top:63.67px;font-size:8.10px;line-height:9.05px;color:#386fb5;transform:scaleX(0.8450)">256.00</div>
<div class="a tx cv" style="left:965.86px;top:63.67px;font-size:8.10px;line-height:9.05px;color:#386fb5;transform:scaleX(0.8450)">256.00</div>
<div class="a tx cv" style="left:36.00px;top:74.47px;font-size:8.20px;line-height:9.16px;color:#386fb5;transform:scaleX(0.8944)">Product 64</div>
<div class="a tx cv" style="left:194.56px;top:74.56px;font-size:8.10px;line-height:9.05px;color:#386fb5;transform:scaleX(0.8450)">320.00</div>
<div class="a tx cv" style="left:234.86px;top:74.56px;font-size:8.10px;line-height:9.05px;color:#386fb5;transform:scaleX(0.8450)">320.00</div>
<div class="a tx cv" style="left:275.36px;top:74.56px;font-size:8.10px;line-height:9.05px;color:#386fb5;transform:scaleX(0.8450)">320.00</div>
<div class="a tx cv" style="left:321.06px;top:74.56px;font-size:8.10px;line-height:9.05px;color:#386fb5;transform:scaleX(0.8450)">320.00</div>
<div class="a tx cv" style="left:362.76px;top:74.56px;font-size:8.10px;line-height:9.05px;color:#386fb5;transform:scaleX(0.8450)">345.60</div>
<div class="a tx cv" style="left:403.46px;top:74.56px;font-size:8.10px;line-height:9.05px;color:#386fb5;transform:scaleX(0.8450)">345.60</div>
<div class="a tx cv" style="left:443.86px;top:74.56px;font-size:8.10px;line-height:9.05px;color:#386fb5;transform:scaleX(0.8450)">345.60</div>
<div class="a tx cv" style="left:488.26px;top:74.56px;font-size:8.10px;line-height:9.05px;color:#386fb5;transform:scaleX(0.8450)">345.60</div>
<div class="a tx cv" style="left:532.06px;top:74.56px;font-size:8.10px;line-height:9.05px;color:#386fb5;transform:scaleX(0.8450)">345.60</div>
<div class="a tx cv" style="left:573.06px;top:74.56px;font-size:8.10px;line-height:9.05px;color:#386fb5;transform:scaleX(0.8450)">345.60</div>
<div class="a tx cv" style="left:617.86px;top:74.56px;font-size:8.10px;line-height:9.05px;color:#386fb5;transform:scaleX(0.8450)">345.60</div>
<div class="a tx cv" style="left:660.56px;top:74.56px;font-size:8.10px;line-height:9.05px;color:#386fb5;transform:scaleX(0.8450)">345.60</div>
<div class="a tx cv" style="left:704.86px;top:74.56px;font-size:8.10px;line-height:9.05px;color:#386fb5;transform:scaleX(0.8450)">345.60</div>
<div class="a tx cv" style="left:747.06px;top:74.56px;font-size:8.10px;line-height:9.05px;color:#386fb5;transform:scaleX(0.8450)">345.60</div>
<div class="a tx cv" style="left:792.86px;top:74.56px;font-size:8.10px;line-height:9.05px;color:#386fb5;transform:scaleX(0.8450)">345.60</div>
<div class="a tx cv" style="left:835.66px;top:74.56px;font-size:8.10px;line-height:9.05px;color:#386fb5;transform:scaleX(0.8450)">345.60</div>
<div class="a tx cv" style="left:881.06px;top:74.56px;font-size:8.10px;line-height:9.05px;color:#386fb5;transform:scaleX(0.8450)">345.60</div>
<div class="a tx cv" style="left:921.36px;top:74.56px;font-size:8.10px;line-height:9.05px;color:#386fb5;transform:scaleX(0.8450)">345.60</div>
<div class="a tx cv" style="left:965.86px;top:74.56px;font-size:8.10px;line-height:9.05px;color:#386fb5;transform:scaleX(0.8450)">345.60</div>
<div class="a tx cv" style="left:36.00px;top:85.36px;font-size:8.20px;line-height:9.16px;color:#386fb5;transform:scaleX(0.8944)">Product 65</div>
<div class="a tx cv" style="left:194.56px;top:85.45px;font-size:8.10px;line-height:9.05px;color:#386fb5;transform:scaleX(0.8450)">332.80</div>
<div class="a tx cv" style="left:234.86px;top:85.45px;font-size:8.10px;line-height:9.05px;color:#386fb5;transform:scaleX(0.8450)">332.80</div>
<div class="a tx cv" style="left:275.36px;top:85.45px;font-size:8.10px;line-height:9.05px;color:#386fb5;transform:scaleX(0.8450)">332.80</div>
<div class="a tx cv" style="left:321.06px;top:85.45px;font-size:8.10px;line-height:9.05px;color:#386fb5;transform:scaleX(0.8450)">332.80</div>
<div class="a tx cv" style="left:362.76px;top:85.45px;font-size:8.10px;line-height:9.05px;color:#386fb5;transform:scaleX(0.8450)">345.60</div>
<div class="a tx cv" style="left:403.46px;top:85.45px;font-size:8.10px;line-height:9.05px;color:#386fb5;transform:scaleX(0.8450)">345.60</div>
<div class="a tx cv" style="left:443.86px;top:85.45px;font-size:8.10px;line-height:9.05px;color:#386fb5;transform:scaleX(0.8450)">345.60</div>
<div class="a tx cv" style="left:488.26px;top:85.45px;font-size:8.10px;line-height:9.05px;color:#386fb5;transform:scaleX(0.8450)">345.60</div>
<div class="a tx cv" style="left:532.06px;top:85.45px;font-size:8.10px;line-height:9.05px;color:#386fb5;transform:scaleX(0.8450)">345.60</div>
<div class="a tx cv" style="left:573.06px;top:85.45px;font-size:8.10px;line-height:9.05px;color:#386fb5;transform:scaleX(0.8450)">345.60</div>
<div class="a tx cv" style="left:617.86px;top:85.45px;font-size:8.10px;line-height:9.05px;color:#386fb5;transform:scaleX(0.8450)">345.60</div>
<div class="a tx cv" style="left:660.56px;top:85.45px;font-size:8.10px;line-height:9.05px;color:#386fb5;transform:scaleX(0.8450)">345.60</div>
<div class="a tx cv" style="left:704.86px;top:85.45px;font-size:8.10px;line-height:9.05px;color:#386fb5;transform:scaleX(0.8450)">345.60</div>
<div class="a tx cv" style="left:747.06px;top:85.45px;font-size:8.10px;line-height:9.05px;color:#386fb5;transform:scaleX(0.8450)">345.60</div>
<div class="a tx cv" style="left:792.86px;top:85.45px;font-size:8.10px;line-height:9.05px;color:#386fb5;transform:scaleX(0.8450)">345.60</div>
<div class="a tx cv" style="left:835.66px;top:85.45px;font-size:8.10px;line-height:9.05px;color:#386fb5;transform:scaleX(0.8450)">345.60</div>
<div class="a tx cv" style="left:881.06px;top:85.45px;font-size:8.10px;line-height:9.05px;color:#386fb5;transform:scaleX(0.8450)">345.60</div>
<div class="a tx cv" style="left:921.36px;top:85.45px;font-size:8.10px;line-height:9.05px;color:#386fb5;transform:scaleX(0.8450)">345.60</div>
<div class="a tx cv" style="left:965.86px;top:85.45px;font-size:8.10px;line-height:9.05px;color:#386fb5;transform:scaleX(0.8450)">345.60</div>
<div class="a tx cv" style="left:36.00px;top:96.25px;font-size:8.20px;line-height:9.16px;color:#386fb5;transform:scaleX(0.8944)">Product 66</div>
<div class="a tx cv" style="left:194.56px;top:96.34px;font-size:8.10px;line-height:9.05px;color:#386fb5;transform:scaleX(0.8450)">256.00</div>
<div class="a tx cv" style="left:234.86px;top:96.34px;font-size:8.10px;line-height:9.05px;color:#386fb5;transform:scaleX(0.8450)">256.00</div>
<div class="a tx cv" style="left:275.36px;top:96.34px;font-size:8.10px;line-height:9.05px;color:#386fb5;transform:scaleX(0.8450)">256.00</div>
<div class="a tx cv" style="left:321.06px;top:96.34px;font-size:8.10px;line-height:9.05px;color:#386fb5;transform:scaleX(0.8450)">256.00</div>
<div class="a tx cv" style="left:362.76px;top:96.34px;font-size:8.10px;line-height:9.05px;color:#386fb5;transform:scaleX(0.8450)">256.00</div>
<div class="a tx cv" style="left:403.46px;top:96.34px;font-size:8.10px;line-height:9.05px;color:#386fb5;transform:scaleX(0.8450)">256.00</div>
<div class="a tx cv" style="left:443.86px;top:96.34px;font-size:8.10px;line-height:9.05px;color:#386fb5;transform:scaleX(0.8450)">256.00</div>
<div class="a tx cv" style="left:488.26px;top:96.34px;font-size:8.10px;line-height:9.05px;color:#386fb5;transform:scaleX(0.8450)">256.00</div>
<div class="a tx cv" style="left:532.06px;top:96.34px;font-size:8.10px;line-height:9.05px;color:#386fb5;transform:scaleX(0.8450)">256.00</div>
<div class="a tx cv" style="left:573.06px;top:96.34px;font-size:8.10px;line-height:9.05px;color:#386fb5;transform:scaleX(0.8450)">256.00</div>
<div class="a tx cv" style="left:617.86px;top:96.34px;font-size:8.10px;line-height:9.05px;color:#386fb5;transform:scaleX(0.8450)">256.00</div>
<div class="a tx cv" style="left:660.56px;top:96.34px;font-size:8.10px;line-height:9.05px;color:#386fb5;transform:scaleX(0.8450)">256.00</div>
<div class="a tx cv" style="left:704.86px;top:96.34px;font-size:8.10px;line-height:9.05px;color:#386fb5;transform:scaleX(0.8450)">256.00</div>
<div class="a tx cv" style="left:747.06px;top:96.34px;font-size:8.10px;line-height:9.05px;color:#386fb5;transform:scaleX(0.8450)">256.00</div>
<div class="a tx cv" style="left:792.86px;top:96.34px;font-size:8.10px;line-height:9.05px;color:#386fb5;transform:scaleX(0.8450)">256.00</div>
<div class="a tx cv" style="left:835.66px;top:96.34px;font-size:8.10px;line-height:9.05px;color:#386fb5;transform:scaleX(0.8450)">256.00</div>
<div class="a tx cv" style="left:881.06px;top:96.34px;font-size:8.10px;line-height:9.05px;color:#386fb5;transform:scaleX(0.8450)">256.00</div>
<div class="a tx cv" style="left:921.36px;top:96.34px;font-size:8.10px;line-height:9.05px;color:#386fb5;transform:scaleX(0.8450)">256.00</div>
<div class="a tx cv" style="left:965.86px;top:96.34px;font-size:8.10px;line-height:9.05px;color:#386fb5;transform:scaleX(0.8450)">256.00</div>
<div class="a tx cv" style="left:36.00px;top:107.14px;font-size:8.20px;line-height:9.16px;color:#386fb5;transform:scaleX(0.8944)">Product 67</div>
<div class="a tx cv" style="left:194.56px;top:107.23px;font-size:8.10px;line-height:9.05px;color:#386fb5;transform:scaleX(0.8450)">384.00</div>
<div class="a tx cv" style="left:234.86px;top:107.23px;font-size:8.10px;line-height:9.05px;color:#386fb5;transform:scaleX(0.8450)">384.00</div>
<div class="a tx cv" style="left:275.36px;top:107.23px;font-size:8.10px;line-height:9.05px;color:#386fb5;transform:scaleX(0.8450)">384.00</div>
<div class="a tx cv" style="left:321.06px;top:107.23px;font-size:8.10px;line-height:9.05px;color:#386fb5;transform:scaleX(0.8450)">384.00</div>
<div class="a tx cv" style="left:362.76px;top:107.23px;font-size:8.10px;line-height:9.05px;color:#386fb5;transform:scaleX(0.8450)">384.00</div>
<div class="a tx cv" style="left:403.46px;top:107.23px;font-size:8.10px;line-height:9.05px;color:#386fb5;transform:scaleX(0.8450)">384.00</div>
<div class="a tx cv" style="left:443.86px;top:107.23px;font-size:8.10px;line-height:9.05px;color:#386fb5;transform:scaleX(0.8450)">384.00</div>
<div class="a tx cv" style="left:488.26px;top:107.23px;font-size:8.10px;line-height:9.05px;color:#386fb5;transform:scaleX(0.8450)">384.00</div>
<div class="a tx cv" style="left:532.06px;top:107.23px;font-size:8.10px;line-height:9.05px;color:#386fb5;transform:scaleX(0.8450)">384.00</div>
<div class="a tx cv" style="left:573.06px;top:107.23px;font-size:8.10px;line-height:9.05px;color:#386fb5;transform:scaleX(0.8450)">384.00</div>
<div class="a tx cv" style="left:617.86px;top:107.23px;font-size:8.10px;line-height:9.05px;color:#386fb5;transform:scaleX(0.8450)">384.00</div>
<div class="a tx cv" style="left:660.56px;top:107.23px;font-size:8.10px;line-height:9.05px;color:#386fb5;transform:scaleX(0.8450)">384.00</div>
<div class="a tx cv" style="left:704.86px;top:107.23px;font-size:8.10px;line-height:9.05px;color:#386fb5;transform:scaleX(0.8450)">384.00</div>
<div class="a tx cv" style="left:747.06px;top:107.23px;font-size:8.10px;line-height:9.05px;color:#386fb5;transform:scaleX(0.8450)">384.00</div>
<div class="a tx cv" style="left:792.86px;top:107.23px;font-size:8.10px;line-height:9.05px;color:#386fb5;transform:scaleX(0.8450)">384.00</div>
<div class="a tx cv" style="left:835.66px;top:107.23px;font-size:8.10px;line-height:9.05px;color:#386fb5;transform:scaleX(0.8450)">384.00</div>
<div class="a tx cv" style="left:881.06px;top:107.23px;font-size:8.10px;line-height:9.05px;color:#386fb5;transform:scaleX(0.8450)">384.00</div>
<div class="a tx cv" style="left:921.36px;top:107.23px;font-size:8.10px;line-height:9.05px;color:#386fb5;transform:scaleX(0.8450)">384.00</div>
<div class="a tx cv" style="left:965.86px;top:107.23px;font-size:8.10px;line-height:9.05px;color:#386fb5;transform:scaleX(0.8450)">384.00</div>
<div class="a tx cv" style="left:36.00px;top:118.03px;font-size:8.20px;line-height:9.16px;color:#386fb5;transform:scaleX(0.8944)">Product 68</div>
<div class="a tx cv" style="left:194.56px;top:118.12px;font-size:8.10px;line-height:9.05px;color:#386fb5;transform:scaleX(0.8450)">486.40</div>
<div class="a tx cv" style="left:234.86px;top:118.12px;font-size:8.10px;line-height:9.05px;color:#386fb5;transform:scaleX(0.8450)">486.40</div>
<div class="a tx cv" style="left:275.36px;top:118.12px;font-size:8.10px;line-height:9.05px;color:#386fb5;transform:scaleX(0.8450)">486.40</div>
<div class="a tx cv" style="left:321.06px;top:118.12px;font-size:8.10px;line-height:9.05px;color:#386fb5;transform:scaleX(0.8450)">486.40</div>
<div class="a tx cv" style="left:362.76px;top:118.12px;font-size:8.10px;line-height:9.05px;color:#386fb5;transform:scaleX(0.8450)">486.40</div>
<div class="a tx cv" style="left:403.46px;top:118.12px;font-size:8.10px;line-height:9.05px;color:#386fb5;transform:scaleX(0.8450)">486.40</div>
<div class="a tx cv" style="left:443.86px;top:118.12px;font-size:8.10px;line-height:9.05px;color:#386fb5;transform:scaleX(0.8450)">486.40</div>
<div class="a tx cv" style="left:488.26px;top:118.12px;font-size:8.10px;line-height:9.05px;color:#386fb5;transform:scaleX(0.8450)">486.40</div>
<div class="a tx cv" style="left:532.06px;top:118.12px;font-size:8.10px;line-height:9.05px;color:#386fb5;transform:scaleX(0.8450)">486.40</div>
<div class="a tx cv" style="left:573.06px;top:118.12px;font-size:8.10px;line-height:9.05px;color:#386fb5;transform:scaleX(0.8450)">486.40</div>
<div class="a tx cv" style="left:617.86px;top:118.12px;font-size:8.10px;line-height:9.05px;color:#386fb5;transform:scaleX(0.8450)">486.40</div>
<div class="a tx cv" style="left:660.56px;top:118.12px;font-size:8.10px;line-height:9.05px;color:#386fb5;transform:scaleX(0.8450)">486.40</div>
<div class="a tx cv" style="left:704.86px;top:118.12px;font-size:8.10px;line-height:9.05px;color:#386fb5;transform:scaleX(0.8450)">486.40</div>
<div class="a tx cv" style="left:747.06px;top:118.12px;font-size:8.10px;line-height:9.05px;color:#386fb5;transform:scaleX(0.8450)">486.40</div>
<div class="a tx cv" style="left:792.86px;top:118.12px;font-size:8.10px;line-height:9.05px;color:#386fb5;transform:scaleX(0.8450)">486.40</div>
<div class="a tx cv" style="left:835.66px;top:118.12px;font-size:8.10px;line-height:9.05px;color:#386fb5;transform:scaleX(0.8450)">486.40</div>
<div class="a tx cv" style="left:881.06px;top:118.12px;font-size:8.10px;line-height:9.05px;color:#386fb5;transform:scaleX(0.8450)">486.40</div>
<div class="a tx cv" style="left:921.36px;top:118.12px;font-size:8.10px;line-height:9.05px;color:#386fb5;transform:scaleX(0.8450)">486.40</div>
<div class="a tx cv" style="left:965.86px;top:118.12px;font-size:8.10px;line-height:9.05px;color:#386fb5;transform:scaleX(0.8450)">486.40</div>
<div class="a tx cv" style="left:36.00px;top:128.92px;font-size:8.20px;line-height:9.16px;color:#386fb5;transform:scaleX(0.8944)">Product 69</div>
<div class="a tx cv" style="left:194.56px;top:129.01px;font-size:8.10px;line-height:9.05px;color:#386fb5;transform:scaleX(0.8450)">422.40</div>
<div class="a tx cv" style="left:234.86px;top:129.01px;font-size:8.10px;line-height:9.05px;color:#386fb5;transform:scaleX(0.8450)">422.40</div>
<div class="a tx cv" style="left:275.36px;top:129.01px;font-size:8.10px;line-height:9.05px;color:#386fb5;transform:scaleX(0.8450)">422.40</div>
<div class="a tx cv" style="left:321.06px;top:129.01px;font-size:8.10px;line-height:9.05px;color:#386fb5;transform:scaleX(0.8450)">422.40</div>
<div class="a tx cv" style="left:362.76px;top:129.01px;font-size:8.10px;line-height:9.05px;color:#386fb5;transform:scaleX(0.8450)">448.00</div>
<div class="a tx cv" style="left:403.46px;top:129.01px;font-size:8.10px;line-height:9.05px;color:#386fb5;transform:scaleX(0.8450)">448.00</div>
<div class="a tx cv" style="left:443.86px;top:129.01px;font-size:8.10px;line-height:9.05px;color:#386fb5;transform:scaleX(0.8450)">448.00</div>
<div class="a tx cv" style="left:488.26px;top:129.01px;font-size:8.10px;line-height:9.05px;color:#386fb5;transform:scaleX(0.8450)">448.00</div>
<div class="a tx cv" style="left:532.06px;top:129.01px;font-size:8.10px;line-height:9.05px;color:#386fb5;transform:scaleX(0.8450)">448.00</div>
<div class="a tx cv" style="left:573.06px;top:129.01px;font-size:8.10px;line-height:9.05px;color:#386fb5;transform:scaleX(0.8450)">448.00</div>
<div class="a tx cv" style="left:617.86px;top:129.01px;font-size:8.10px;line-height:9.05px;color:#386fb5;transform:scaleX(0.8450)">448.00</div>
<div class="a tx cv" style="left:660.56px;top:129.01px;font-size:8.10px;line-height:9.05px;color:#386fb5;transform:scaleX(0.8450)">448.00</div>
<div class="a tx cv" style="left:704.86px;top:129.01px;font-size:8.10px;line-height:9.05px;color:#386fb5;transform:scaleX(0.8450)">448.00</div>
<div class="a tx cv" style="left:747.06px;top:129.01px;font-size:8.10px;line-height:9.05px;color:#386fb5;transform:scaleX(0.8450)">448.00</div>
<div class="a tx cv" style="left:792.86px;top:129.01px;font-size:8.10px;line-height:9.05px;color:#386fb5;transform:scaleX(0.8450)">448.00</div>
<div class="a tx cv" style="left:835.66px;top:129.01px;font-size:8.10px;line-height:9.05px;color:#386fb5;transform:scaleX(0.8450)">448.00</div>
<div class="a tx cv" style="left:881.06px;top:129.01px;font-size:8.10px;line-height:9.05px;color:#386fb5;transform:scaleX(0.8450)">448.00</div>
<div class="a tx cv" style="left:921.36px;top:129.01px;font-size:8.10px;line-height:9.05px;color:#386fb5;transform:scaleX(0.8450)">448.00</div>
<div class="a tx cv" style="left:965.86px;top:129.01px;font-size:8.10px;line-height:9.05px;color:#386fb5;transform:scaleX(0.8450)">448.00</div>
<div class="a tx cv" style="left:36.00px;top:139.81px;font-size:8.20px;line-height:9.16px;color:#386fb5;transform:scaleX(0.8944)">Product 70</div>
<div class="a tx cv" style="left:194.56px;top:139.90px;font-size:8.10px;line-height:9.05px;color:#386fb5;transform:scaleX(0.8450)">256.00</div>
<div class="a tx cv" style="left:234.86px;top:139.90px;font-size:8.10px;line-height:9.05px;color:#386fb5;transform:scaleX(0.8450)">256.00</div>
<div class="a tx cv" style="left:275.36px;top:139.90px;font-size:8.10px;line-height:9.05px;color:#386fb5;transform:scaleX(0.8450)">256.00</div>
<div class="a tx cv" style="left:321.06px;top:139.90px;font-size:8.10px;line-height:9.05px;color:#386fb5;transform:scaleX(0.8450)">256.00</div>
<div class="a tx cv" style="left:362.76px;top:139.90px;font-size:8.10px;line-height:9.05px;color:#386fb5;transform:scaleX(0.8450)">256.00</div>
<div class="a tx cv" style="left:403.46px;top:139.90px;font-size:8.10px;line-height:9.05px;color:#386fb5;transform:scaleX(0.8450)">256.00</div>
<div class="a tx cv" style="left:443.86px;top:139.90px;font-size:8.10px;line-height:9.05px;color:#386fb5;transform:scaleX(0.8450)">256.00</div>
<div class="a tx cv" style="left:488.26px;top:139.90px;font-size:8.10px;line-height:9.05px;color:#386fb5;transform:scaleX(0.8450)">256.00</div>
<div class="a tx cv" style="left:532.06px;top:139.90px;font-size:8.10px;line-height:9.05px;color:#386fb5;transform:scaleX(0.8450)">256.00</div>
<div class="a tx cv" style="left:573.06px;top:139.90px;font-size:8.10px;line-height:9.05px;color:#386fb5;transform:scaleX(0.8450)">256.00</div>
<div class="a tx cv" style="left:617.86px;top:139.90px;font-size:8.10px;line-height:9.05px;color:#386fb5;transform:scaleX(0.8450)">256.00</div>
<div class="a tx cv" style="left:660.56px;top:139.90px;font-size:8.10px;line-height:9.05px;color:#386fb5;transform:scaleX(0.8450)">256.00</div>
<div class="a tx cv" style="left:704.86px;top:139.90px;font-size:8.10px;line-height:9.05px;color:#386fb5;transform:scaleX(0.8450)">256.00</div>
<div class="a tx cv" style="left:747.06px;top:139.90px;font-size:8.10px;line-height:9.05px;color:#386fb5;transform:scaleX(0.8450)">256.00</div>
<div class="a tx cv" style="left:792.86px;top:139.90px;font-size:8.10px;line-height:9.05px;color:#386fb5;transform:scaleX(0.8450)">256.00</div>
<div class="a tx cv" style="left:835.66px;top:139.90px;font-size:8.10px;line-height:9.05px;color:#386fb5;transform:scaleX(0.8450)">256.00</div>
<div class="a tx cv" style="left:881.06px;top:139.90px;font-size:8.10px;line-height:9.05px;color:#386fb5;transform:scaleX(0.8450)">256.00</div>
<div class="a tx cv" style="left:921.36px;top:139.90px;font-size:8.10px;line-height:9.05px;color:#386fb5;transform:scaleX(0.8450)">256.00</div>
<div class="a tx cv" style="left:965.86px;top:139.90px;font-size:8.10px;line-height:9.05px;color:#386fb5;transform:scaleX(0.8450)">256.00</div>
<div class="a tx cv" style="left:36.00px;top:150.70px;font-size:8.20px;line-height:9.16px;color:#386fb5;transform:scaleX(0.8944)">Product 71</div>
<div class="a tx cv" style="left:194.56px;top:150.79px;font-size:8.10px;line-height:9.05px;color:#386fb5;transform:scaleX(0.8450)">128.00</div>
<div class="a tx cv" style="left:234.86px;top:150.79px;font-size:8.10px;line-height:9.05px;color:#386fb5;transform:scaleX(0.8450)">128.00</div>
<div class="a tx cv" style="left:275.36px;top:150.79px;font-size:8.10px;line-height:9.05px;color:#386fb5;transform:scaleX(0.8450)">128.00</div>
<div class="a tx cv" style="left:321.06px;top:150.79px;font-size:8.10px;line-height:9.05px;color:#386fb5;transform:scaleX(0.8450)">128.00</div>
<div class="a tx cv" style="left:362.76px;top:150.79px;font-size:8.10px;line-height:9.05px;color:#386fb5;transform:scaleX(0.8450)">140.80</div>
<div class="a tx cv" style="left:403.46px;top:150.79px;font-size:8.10px;line-height:9.05px;color:#386fb5;transform:scaleX(0.8450)">140.80</div>
<div class="a tx cv" style="left:443.86px;top:150.79px;font-size:8.10px;line-height:9.05px;color:#386fb5;transform:scaleX(0.8450)">140.80</div>
<div class="a tx cv" style="left:488.26px;top:150.79px;font-size:8.10px;line-height:9.05px;color:#386fb5;transform:scaleX(0.8450)">140.80</div>
<div class="a tx cv" style="left:532.06px;top:150.79px;font-size:8.10px;line-height:9.05px;color:#386fb5;transform:scaleX(0.8450)">140.80</div>
<div class="a tx cv" style="left:573.06px;top:150.79px;font-size:8.10px;line-height:9.05px;color:#386fb5;transform:scaleX(0.8450)">140.80</div>
<div class="a tx cv" style="left:617.86px;top:150.79px;font-size:8.10px;line-height:9.05px;color:#386fb5;transform:scaleX(0.8450)">140.80</div>
<div class="a tx cv" style="left:660.56px;top:150.79px;font-size:8.10px;line-height:9.05px;color:#386fb5;transform:scaleX(0.8450)">140.80</div>
<div class="a tx cv" style="left:704.86px;top:150.79px;font-size:8.10px;line-height:9.05px;color:#386fb5;transform:scaleX(0.8450)">140.80</div>
<div class="a tx cv" style="left:747.06px;top:150.79px;font-size:8.10px;line-height:9.05px;color:#386fb5;transform:scaleX(0.8450)">140.80</div>
<div class="a tx cv" style="left:792.86px;top:150.79px;font-size:8.10px;line-height:9.05px;color:#386fb5;transform:scaleX(0.8450)">140.80</div>
<div class="a tx cv" style="left:835.66px;top:150.79px;font-size:8.10px;line-height:9.05px;color:#386fb5;transform:scaleX(0.8450)">140.80</div>
<div class="a tx cv" style="left:881.06px;top:150.79px;font-size:8.10px;line-height:9.05px;color:#386fb5;transform:scaleX(0.8450)">153.60</div>
<div class="a tx cv" style="left:921.36px;top:150.79px;font-size:8.10px;line-height:9.05px;color:#386fb5;transform:scaleX(0.8450)">153.60</div>
<div class="a tx cv" style="left:965.86px;top:150.79px;font-size:8.10px;line-height:9.05px;color:#386fb5;transform:scaleX(0.8450)">153.60</div>
<div class="a tx cv" style="left:36.00px;top:161.59px;font-size:8.20px;line-height:9.16px;color:#386fb5;transform:scaleX(0.8944)">Product 72</div>
<div class="a tx cv" style="left:194.56px;top:161.68px;font-size:8.10px;line-height:9.05px;color:#386fb5;transform:scaleX(0.8450)">153.60</div>
<div class="a tx cv" style="left:234.86px;top:161.68px;font-size:8.10px;line-height:9.05px;color:#386fb5;transform:scaleX(0.8450)">153.60</div>
<div class="a tx cv" style="left:275.36px;top:161.68px;font-size:8.10px;line-height:9.05px;color:#386fb5;transform:scaleX(0.8450)">153.60</div>
<div class="a tx cv" style="left:321.06px;top:161.68px;font-size:8.10px;line-height:9.05px;color:#386fb5;transform:scaleX(0.8450)">153.60</div>
<div class="a tx cv" style="left:362.76px;top:161.68px;font-size:8.10px;line-height:9.05px;color:#386fb5;transform:scaleX(0.8450)">166.40</div>
<div class="a tx cv" style="left:403.46px;top:161.68px;font-size:8.10px;line-height:9.05px;color:#386fb5;transform:scaleX(0.8450)">166.40</div>
<div class="a tx cv" style="left:443.86px;top:161.68px;font-size:8.10px;line-height:9.05px;color:#386fb5;transform:scaleX(0.8450)">166.40</div>
<div class="a tx cv" style="left:488.26px;top:161.68px;font-size:8.10px;line-height:9.05px;color:#386fb5;transform:scaleX(0.8450)">166.40</div>
<div class="a tx cv" style="left:532.06px;top:161.68px;font-size:8.10px;line-height:9.05px;color:#386fb5;transform:scaleX(0.8450)">166.40</div>
<div class="a tx cv" style="left:573.06px;top:161.68px;font-size:8.10px;line-height:9.05px;color:#386fb5;transform:scaleX(0.8450)">166.40</div>
<div class="a tx cv" style="left:617.86px;top:161.68px;font-size:8.10px;line-height:9.05px;color:#386fb5;transform:scaleX(0.8450)">166.40</div>
<div class="a tx cv" style="left:660.56px;top:161.68px;font-size:8.10px;line-height:9.05px;color:#386fb5;transform:scaleX(0.8450)">166.40</div>
<div class="a tx cv" style="left:704.86px;top:161.68px;font-size:8.10px;line-height:9.05px;color:#386fb5;transform:scaleX(0.8450)">166.40</div>
<div class="a tx cv" style="left:747.06px;top:161.68px;font-size:8.10px;line-height:9.05px;color:#386fb5;transform:scaleX(0.8450)">166.40</div>
<div class="a tx cv" style="left:792.86px;top:161.68px;font-size:8.10px;line-height:9.05px;color:#386fb5;transform:scaleX(0.8450)">166.40</div>
<div class="a tx cv" style="left:835.66px;top:161.68px;font-size:8.10px;line-height:9.05px;color:#386fb5;transform:scaleX(0.8450)">166.40</div>
<div class="a tx cv" style="left:881.06px;top:161.68px;font-size:8.10px;line-height:9.05px;color:#386fb5;transform:scaleX(0.8450)">166.40</div>
<div class="a tx cv" style="left:921.36px;top:161.68px;font-size:8.10px;line-height:9.05px;color:#386fb5;transform:scaleX(0.8450)">166.40</div>
<div class="a tx cv" style="left:965.86px;top:161.68px;font-size:8.10px;line-height:9.05px;color:#386fb5;transform:scaleX(0.8450)">166.40</div>
<div class="a tx cv" style="left:36.00px;top:172.48px;font-size:8.20px;line-height:9.16px;color:#386fb5;transform:scaleX(0.8944)">Product 73</div>
<div class="a tx cv" style="left:194.56px;top:172.57px;font-size:8.10px;line-height:9.05px;color:#386fb5;transform:scaleX(0.8450)">256.00</div>
<div class="a tx cv" style="left:234.86px;top:172.57px;font-size:8.10px;line-height:9.05px;color:#386fb5;transform:scaleX(0.8450)">256.00</div>
<div class="a tx cv" style="left:275.36px;top:172.57px;font-size:8.10px;line-height:9.05px;color:#386fb5;transform:scaleX(0.8450)">256.00</div>
<div class="a tx cv" style="left:321.06px;top:172.57px;font-size:8.10px;line-height:9.05px;color:#386fb5;transform:scaleX(0.8450)">256.00</div>
<div class="a tx cv" style="left:362.76px;top:172.57px;font-size:8.10px;line-height:9.05px;color:#386fb5;transform:scaleX(0.8450)">281.60</div>
<div class="a tx cv" style="left:403.46px;top:172.57px;font-size:8.10px;line-height:9.05px;color:#386fb5;transform:scaleX(0.8450)">281.60</div>
<div class="a tx cv" style="left:443.86px;top:172.57px;font-size:8.10px;line-height:9.05px;color:#386fb5;transform:scaleX(0.8450)">281.60</div>
<div class="a tx cv" style="left:488.26px;top:172.57px;font-size:8.10px;line-height:9.05px;color:#386fb5;transform:scaleX(0.8450)">281.60</div>
<div class="a tx cv" style="left:532.06px;top:172.57px;font-size:8.10px;line-height:9.05px;color:#386fb5;transform:scaleX(0.8450)">281.60</div>
<div class="a tx cv" style="left:573.06px;top:172.57px;font-size:8.10px;line-height:9.05px;color:#386fb5;transform:scaleX(0.8450)">281.60</div>
<div class="a tx cv" style="left:617.86px;top:172.57px;font-size:8.10px;line-height:9.05px;color:#386fb5;transform:scaleX(0.8450)">281.60</div>
<div class="a tx cv" style="left:660.56px;top:172.57px;font-size:8.10px;line-height:9.05px;color:#386fb5;transform:scaleX(0.8450)">281.60</div>
<div class="a tx cv" style="left:704.86px;top:172.57px;font-size:8.10px;line-height:9.05px;color:#386fb5;transform:scaleX(0.8450)">281.60</div>
<div class="a tx cv" style="left:747.06px;top:172.57px;font-size:8.10px;line-height:9.05px;color:#386fb5;transform:scaleX(0.8450)">281.60</div>
<div class="a tx cv" style="left:792.86px;top:172.57px;font-size:8.10px;line-height:9.05px;color:#386fb5;transform:scaleX(0.8450)">281.60</div>
<div class="a tx cv" style="left:835.66px;top:172.57px;font-size:8.10px;line-height:9.05px;color:#386fb5;transform:scaleX(0.8450)">281.60</div>
<div class="a tx cv" style="left:881.06px;top:172.57px;font-size:8.10px;line-height:9.05px;color:#386fb5;transform:scaleX(0.8450)">256.00</div>
<div class="a tx cv" style="left:921.36px;top:172.57px;font-size:8.10px;line-height:9.05px;color:#386fb5;transform:scaleX(0.8450)">256.00</div>
<div class="a tx cv" style="left:965.86px;top:172.57px;font-size:8.10px;line-height:9.05px;color:#386fb5;transform:scaleX(0.8450)">256.00</div>
<div class="a tx cv" style="left:36.00px;top:183.37px;font-size:8.20px;line-height:9.16px;color:#386fb5;transform:scaleX(0.8944)">Product 74</div>
<div class="a tx cv" style="left:194.56px;top:183.46px;font-size:8.10px;line-height:9.05px;color:#386fb5;transform:scaleX(0.8450)">320.00</div>
<div class="a tx cv" style="left:234.86px;top:183.46px;font-size:8.10px;line-height:9.05px;color:#386fb5;transform:scaleX(0.8450)">320.00</div>
<div class="a tx cv" style="left:275.36px;top:183.46px;font-size:8.10px;line-height:9.05px;color:#386fb5;transform:scaleX(0.8450)">320.00</div>
<div class="a tx cv" style="left:321.06px;top:183.46px;font-size:8.10px;line-height:9.05px;color:#386fb5;transform:scaleX(0.8450)">320.00</div>
<div class="a tx cv" style="left:362.76px;top:183.46px;font-size:8.10px;line-height:9.05px;color:#386fb5;transform:scaleX(0.8450)">345.60</div>
<div class="a tx cv" style="left:403.46px;top:183.46px;font-size:8.10px;line-height:9.05px;color:#386fb5;transform:scaleX(0.8450)">345.60</div>
<div class="a tx cv" style="left:443.86px;top:183.46px;font-size:8.10px;line-height:9.05px;color:#386fb5;transform:scaleX(0.8450)">345.60</div>
<div class="a tx cv" style="left:488.26px;top:183.46px;font-size:8.10px;line-height:9.05px;color:#386fb5;transform:scaleX(0.8450)">345.60</div>
<div class="a tx cv" style="left:532.06px;top:183.46px;font-size:8.10px;line-height:9.05px;color:#386fb5;transform:scaleX(0.8450)">345.60</div>
<div class="a tx cv" style="left:573.06px;top:183.46px;font-size:8.10px;line-height:9.05px;color:#386fb5;transform:scaleX(0.8450)">345.60</div>
<div class="a tx cv" style="left:617.86px;top:183.46px;font-size:8.10px;line-height:9.05px;color:#386fb5;transform:scaleX(0.8450)">345.60</div>
<div class="a tx cv" style="left:660.56px;top:183.46px;font-size:8.10px;line-height:9.05px;color:#386fb5;transform:scaleX(0.8450)">345.60</div>
<div class="a tx cv" style="left:704.86px;top:183.46px;font-size:8.10px;line-height:9.05px;color:#386fb5;transform:scaleX(0.8450)">345.60</div>
<div class="a tx cv" style="left:747.06px;top:183.46px;font-size:8.10px;line-height:9.05px;color:#386fb5;transform:scaleX(0.8450)">345.60</div>
<div class="a tx cv" style="left:792.86px;top:183.46px;font-size:8.10px;line-height:9.05px;color:#386fb5;transform:scaleX(0.8450)">345.60</div>
<div class="a tx cv" style="left:835.66px;top:183.46px;font-size:8.10px;line-height:9.05px;color:#386fb5;transform:scaleX(0.8450)">345.60</div>
<div class="a tx cv" style="left:881.06px;top:183.46px;font-size:8.10px;line-height:9.05px;color:#386fb5;transform:scaleX(0.8450)">345.60</div>
<div class="a tx cv" style="left:921.36px;top:183.46px;font-size:8.10px;line-height:9.05px;color:#386fb5;transform:scaleX(0.8450)">345.60</div>
<div class="a tx cv" style="left:965.86px;top:183.46px;font-size:8.10px;line-height:9.05px;color:#386fb5;transform:scaleX(0.8450)">345.60</div>
<div class="a tx cv" style="left:36.00px;top:194.26px;font-size:8.20px;line-height:9.16px;color:#386fb5;transform:scaleX(0.8944)">Product 75</div>
<div class="a tx cv" style="left:194.56px;top:194.35px;font-size:8.10px;line-height:9.05px;color:#386fb5;transform:scaleX(0.8450)">332.80</div>
<div class="a tx cv" style="left:234.86px;top:194.35px;font-size:8.10px;line-height:9.05px;color:#386fb5;transform:scaleX(0.8450)">332.80</div>
<div class="a tx cv" style="left:275.36px;top:194.35px;font-size:8.10px;line-height:9.05px;color:#386fb5;transform:scaleX(0.8450)">332.80</div>
<div class="a tx cv" style="left:321.06px;top:194.35px;font-size:8.10px;line-height:9.05px;color:#386fb5;transform:scaleX(0.8450)">332.80</div>
<div class="a tx cv" style="left:362.76px;top:194.35px;font-size:8.10px;line-height:9.05px;color:#386fb5;transform:scaleX(0.8450)">345.60</div>
<div class="a tx cv" style="left:403.46px;top:194.35px;font-size:8.10px;line-height:9.05px;color:#386fb5;transform:scaleX(0.8450)">345.60</div>
<div class="a tx cv" style="left:443.86px;top:194.35px;font-size:8.10px;line-height:9.05px;color:#386fb5;transform:scaleX(0.8450)">345.60</div>
<div class="a tx cv" style="left:488.26px;top:194.35px;font-size:8.10px;line-height:9.05px;color:#386fb5;transform:scaleX(0.8450)">345.60</div>
<div class="a tx cv" style="left:532.06px;top:194.35px;font-size:8.10px;line-height:9.05px;color:#386fb5;transform:scaleX(0.8450)">345.60</div>
<div class="a tx cv" style="left:573.06px;top:194.35px;font-size:8.10px;line-height:9.05px;color:#386fb5;transform:scaleX(0.8450)">345.60</div>
<div class="a tx cv" style="left:617.86px;top:194.35px;font-size:8.10px;line-height:9.05px;color:#386fb5;transform:scaleX(0.8450)">345.60</div>
<div class="a tx cv" style="left:660.56px;top:194.35px;font-size:8.10px;line-height:9.05px;color:#386fb5;transform:scaleX(0.8450)">345.60</div>
<div class="a tx cv" style="left:704.86px;top:194.35px;font-size:8.10px;line-height:9.05px;color:#386fb5;transform:scaleX(0.8450)">345.60</div>
<div class="a tx cv" style="left:747.06px;top:194.35px;font-size:8.10px;line-height:9.05px;color:#386fb5;transform:scaleX(0.8450)">345.60</div>
<div class="a tx cv" style="left:792.86px;top:194.35px;font-size:8.10px;line-height:9.05px;color:#386fb5;transform:scaleX(0.8450)">345.60</div>
<div class="a tx cv" style="left:835.66px;top:194.35px;font-size:8.10px;line-height:9.05px;color:#386fb5;transform:scaleX(0.8450)">345.60</div>
<div class="a tx cv" style="left:881.06px;top:194.35px;font-size:8.10px;line-height:9.05px;color:#386fb5;transform:scaleX(0.8450)">345.60</div>
<div class="a tx cv" style="left:921.36px;top:194.35px;font-size:8.10px;line-height:9.05px;color:#386fb5;transform:scaleX(0.8450)">345.60</div>
<div class="a tx cv" style="left:965.86px;top:194.35px;font-size:8.10px;line-height:9.05px;color:#386fb5;transform:scaleX(0.8450)">345.60</div>
<div class="a tx cv" style="left:36.00px;top:205.15px;font-size:8.20px;line-height:9.16px;color:#386fb5;transform:scaleX(0.8944)">Product 76</div>
<div class="a tx cv" style="left:194.56px;top:205.24px;font-size:8.10px;line-height:9.05px;color:#386fb5;transform:scaleX(0.8450)">256.00</div>
<div class="a tx cv" style="left:234.86px;top:205.24px;font-size:8.10px;line-height:9.05px;color:#386fb5;transform:scaleX(0.8450)">256.00</div>
<div class="a tx cv" style="left:275.36px;top:205.24px;font-size:8.10px;line-height:9.05px;color:#386fb5;transform:scaleX(0.8450)">256.00</div>
<div class="a tx cv" style="left:321.06px;top:205.24px;font-size:8.10px;line-height:9.05px;color:#386fb5;transform:scaleX(0.8450)">256.00</div>
<div class="a tx cv" style="left:362.76px;top:205.24px;font-size:8.10px;line-height:9.05px;color:#386fb5;transform:scaleX(0.8450)">256.00</div>
<div class="a tx cv" style="left:403.46px;top:205.24px;font-size:8.10px;line-height:9.05px;color:#386fb5;transform:scaleX(0.8450)">256.00</div>
<div class="a tx cv" style="left:443.86px;top:205.24px;font-size:8.10px;line-height:9.05px;color:#386fb5;transform:scaleX(0.8450)">256.00</div>
<div class="a tx cv" style="left:488.26px;top:205.24px;font-size:8.10px;line-height:9.05px;color:#386fb5;transform:scaleX(0.8450)">256.00</div>
<div class="a tx cv" style="left:532.06px;top:205.24px;font-size:8.10px;line-height:9.05px;color:#386fb5;transform:scaleX(0.8450)">256.00</div>
<div class="a tx cv" style="left:573.06px;top:205.24px;font-size:8.10px;line-height:9.05px;color:#386fb5;transform:scaleX(0.8450)">256.00</div>
<div class="a tx cv" style="left:617.86px;top:205.24px;font-size:8.10px;line-height:9.05px;color:#386fb5;transform:scaleX(0.8450)">256.00</div>
<div class="a tx cv" style="left:660.56px;top:205.24px;font-size:8.10px;line-height:9.05px;color:#386fb5;transform:scaleX(0.8450)">256.00</div>
<div class="a tx cv" style="left:704.86px;top:205.24px;font-size:8.10px;line-height:9.05px;color:#386fb5;transform:scaleX(0.8450)">256.00</div>
<div class="a tx cv" style="left:747.06px;top:205.24px;font-size:8.10px;line-height:9.05px;color:#386fb5;transform:scaleX(0.8450)">256.00</div>
<div class="a tx cv" style="left:792.86px;top:205.24px;font-size:8.10px;line-height:9.05px;color:#386fb5;transform:scaleX(0.8450)">256.00</div>
<div class="a tx cv" style="left:835.66px;top:205.24px;font-size:8.10px;line-height:9.05px;color:#386fb5;transform:scaleX(0.8450)">256.00</div>
<div class="a tx cv" style="left:881.06px;top:205.24px;font-size:8.10px;line-height:9.05px;color:#386fb5;transform:scaleX(0.8450)">256.00</div>
<div class="a tx cv" style="left:921.36px;top:205.24px;font-size:8.10px;line-height:9.05px;color:#386fb5;transform:scaleX(0.8450)">256.00</div>
<div class="a tx cv" style="left:965.86px;top:205.24px;font-size:8.10px;line-height:9.05px;color:#386fb5;transform:scaleX(0.8450)">256.00</div>
<div class="a tx cv" style="left:36.00px;top:216.04px;font-size:8.20px;line-height:9.16px;color:#386fb5;transform:scaleX(0.8944)">Product 77</div>
<div class="a tx cv" style="left:194.56px;top:216.13px;font-size:8.10px;line-height:9.05px;color:#386fb5;transform:scaleX(0.8450)">384.00</div>
<div class="a tx cv" style="left:234.86px;top:216.13px;font-size:8.10px;line-height:9.05px;color:#386fb5;transform:scaleX(0.8450)">384.00</div>
<div class="a tx cv" style="left:275.36px;top:216.13px;font-size:8.10px;line-height:9.05px;color:#386fb5;transform:scaleX(0.8450)">384.00</div>
<div class="a tx cv" style="left:321.06px;top:216.13px;font-size:8.10px;line-height:9.05px;color:#386fb5;transform:scaleX(0.8450)">384.00</div>
<div class="a tx cv" style="left:362.76px;top:216.13px;font-size:8.10px;line-height:9.05px;color:#386fb5;transform:scaleX(0.8450)">384.00</div>
<div class="a tx cv" style="left:403.46px;top:216.13px;font-size:8.10px;line-height:9.05px;color:#386fb5;transform:scaleX(0.8450)">384.00</div>
<div class="a tx cv" style="left:443.86px;top:216.13px;font-size:8.10px;line-height:9.05px;color:#386fb5;transform:scaleX(0.8450)">384.00</div>
<div class="a tx cv" style="left:488.26px;top:216.13px;font-size:8.10px;line-height:9.05px;color:#386fb5;transform:scaleX(0.8450)">384.00</div>
<div class="a tx cv" style="left:532.06px;top:216.13px;font-size:8.10px;line-height:9.05px;color:#386fb5;transform:scaleX(0.8450)">384.00</div>
<div class="a tx cv" style="left:573.06px;top:216.13px;font-size:8.10px;line-height:9.05px;color:#386fb5;transform:scaleX(0.8450)">384.00</div>
<div class="a tx cv" style="left:617.86px;top:216.13px;font-size:8.10px;line-height:9.05px;color:#386fb5;transform:scaleX(0.8450)">384.00</div>
<div class="a tx cv" style="left:660.56px;top:216.13px;font-size:8.10px;line-height:9.05px;color:#386fb5;transform:scaleX(0.8450)">384.00</div>
<div class="a tx cv" style="left:704.86px;top:216.13px;font-size:8.10px;line-height:9.05px;color:#386fb5;transform:scaleX(0.8450)">384.00</div>
<div class="a tx cv" style="left:747.06px;top:216.13px;font-size:8.10px;line-height:9.05px;color:#386fb5;transform:scaleX(0.8450)">384.00</div>
<div class="a tx cv" style="left:792.86px;top:216.13px;font-size:8.10px;line-height:9.05px;color:#386fb5;transform:scaleX(0.8450)">384.00</div>
<div class="a tx cv" style="left:835.66px;top:216.13px;font-size:8.10px;line-height:9.05px;color:#386fb5;transform:scaleX(0.8450)">384.00</div>
<div class="a tx cv" style="left:881.06px;top:216.13px;font-size:8.10px;line-height:9.05px;color:#386fb5;transform:scaleX(0.8450)">384.00</div>
<div class="a tx cv" style="left:921.36px;top:216.13px;font-size:8.10px;line-height:9.05px;color:#386fb5;transform:scaleX(0.8450)">384.00</div>
<div class="a tx cv" style="left:965.86px;top:216.13px;font-size:8.10px;line-height:9.05px;color:#386fb5;transform:scaleX(0.8450)">384.00</div>
<div class="a tx cv" style="left:36.00px;top:226.93px;font-size:8.20px;line-height:9.16px;color:#386fb5;transform:scaleX(0.8944)">Product 78</div>
<div class="a tx cv" style="left:194.56px;top:227.02px;font-size:8.10px;line-height:9.05px;color:#386fb5;transform:scaleX(0.8450)">486.40</div>
<div class="a tx cv" style="left:234.86px;top:227.02px;font-size:8.10px;line-height:9.05px;color:#386fb5;transform:scaleX(0.8450)">486.40</div>
<div class="a tx cv" style="left:275.36px;top:227.02px;font-size:8.10px;line-height:9.05px;color:#386fb5;transform:scaleX(0.8450)">486.40</div>
<div class="a tx cv" style="left:321.06px;top:227.02px;font-size:8.10px;line-height:9.05px;color:#386fb5;transform:scaleX(0.8450)">486.40</div>
<div class="a tx cv" style="left:362.76px;top:227.02px;font-size:8.10px;line-height:9.05px;color:#386fb5;transform:scaleX(0.8450)">486.40</div>
<div class="a tx cv" style="left:403.46px;top:227.02px;font-size:8.10px;line-height:9.05px;color:#386fb5;transform:scaleX(0.8450)">486.40</div>
<div class="a tx cv" style="left:443.86px;top:227.02px;font-size:8.10px;line-height:9.05px;color:#386fb5;transform:scaleX(0.8450)">486.40</div>
<div class="a tx cv" style="left:488.26px;top:227.02px;font-size:8.10px;line-height:9.05px;color:#386fb5;transform:scaleX(0.8450)">486.40</div>
<div class="a tx cv" style="left:532.06px;top:227.02px;font-size:8.10px;line-height:9.05px;color:#386fb5;transform:scaleX(0.8450)">486.40</div>
<div class="a tx cv" style="left:573.06px;top:227.02px;font-size:8.10px;line-height:9.05px;color:#386fb5;transform:scaleX(0.8450)">486.40</div>
<div class="a tx cv" style="left:617.86px;top:227.02px;font-size:8.10px;line-height:9.05px;color:#386fb5;transform:scaleX(0.8450)">486.40</div>
<div class="a tx cv" style="left:660.56px;top:227.02px;font-size:8.10px;line-height:9.05px;color:#386fb5;transform:scaleX(0.8450)">486.40</div>
<div class="a tx cv" style="left:704.86px;top:227.02px;font-size:8.10px;line-height:9.05px;color:#386fb5;transform:scaleX(0.8450)">486.40</div>
<div class="a tx cv" style="left:747.06px;top:227.02px;font-size:8.10px;line-height:9.05px;color:#386fb5;transform:scaleX(0.8450)">486.40</div>
<div class="a tx cv" style="left:792.86px;top:227.02px;font-size:8.10px;line-height:9.05px;color:#386fb5;transform:scaleX(0.8450)">486.40</div>
<div class="a tx cv" style="left:835.66px;top:227.02px;font-size:8.10px;line-height:9.05px;color:#386fb5;transform:scaleX(0.8450)">486.40</div>
<div class="a tx cv" style="left:881.06px;top:227.02px;font-size:8.10px;line-height:9.05px;color:#386fb5;transform:scaleX(0.8450)">486.40</div>
<div class="a tx cv" style="left:921.36px;top:227.02px;font-size:8.10px;line-height:9.05px;color:#386fb5;transform:scaleX(0.8450)">486.40</div>
<div class="a tx cv" style="left:965.86px;top:227.02px;font-size:8.10px;line-height:9.05px;color:#386fb5;transform:scaleX(0.8450)">486.40</div>
<div class="a tx cv" style="left:36.00px;top:237.82px;font-size:8.20px;line-height:9.16px;color:#386fb5;transform:scaleX(0.8944)">Product 79</div>
<div class="a tx cv" style="left:194.56px;top:237.91px;font-size:8.10px;line-height:9.05px;color:#386fb5;transform:scaleX(0.8450)">422.40</div>
<div class="a tx cv" style="left:234.86px;top:237.91px;font-size:8.10px;line-height:9.05px;color:#386fb5;transform:scaleX(0.8450)">422.40</div>
<div class="a tx cv" style="left:275.36px;top:237.91px;font-size:8.10px;line-height:9.05px;color:#386fb5;transform:scaleX(0.8450)">422.40</div>
<div class="a tx cv" style="left:321.06px;top:237.91px;font-size:8.10px;line-height:9.05px;color:#386fb5;transform:scaleX(0.8450)">422.40</div>
<div class="a tx cv" style="left:362.76px;top:237.91px;font-size:8.10px;line-height:9.05px;color:#386fb5;transform:scaleX(0.8450)">448.00</div>
<div class="a tx cv" style="left:403.46px;top:237.91px;font-size:8.10px;line-height:9.05px;color:#386fb5;transform:scaleX(0.8450)">448.00</div>
<div class="a tx cv" style="left:443.86px;top:237.91px;font-size:8.10px;line-height:9.05px;color:#386fb5;transform:scaleX(0.8450)">448.00</div>
<div class="a tx cv" style="left:488.26px;top:237.91px;font-size:8.10px;line-height:9.05px;color:#386fb5;transform:scaleX(0.8450)">448.00</div>
<div class="a tx cv" style="left:532.06px;top:237.91px;font-size:8.10px;line-height:9.05px;color:#386fb5;transform:scaleX(0.8450)">448.00</div>
<div class="a tx cv" style="left:573.06px;top:237.91px;font-size:8.10px;line-height:9.05px;color:#386fb5;transform:scaleX(0.8450)">448.00</div>
<div class="a tx cv" style="left:617.86px;top:237.91px;font-size:8.10px;line-height:9.05px;color:#386fb5;transform:scaleX(0.8450)">448.00</div>
<div class="a tx cv" style="left:660.56px;top:237.91px;font-size:8.10px;line-height:9.05px;color:#386fb5;transform:scaleX(0.8450)">448.00</div>
<div class="a tx cv" style="left:704.86px;top:237.91px;font-size:8.10px;line-height:9.05px;color:#386fb5;transform:scaleX(0.8450)">448.00</div>
<div class="a tx cv" style="left:747.06px;top:237.91px;font-size:8.10px;line-height:9.05px;color:#386fb5;transform:scaleX(0.8450)">448.00</div>
<div class="a tx cv" style="left:792.86px;top:237.91px;font-size:8.10px;line-height:9.05px;color:#386fb5;transform:scaleX(0.8450)">448.00</div>
<div class="a tx cv" style="left:835.66px;top:237.91px;font-size:8.10px;line-height:9.05px;color:#386fb5;transform:scaleX(0.8450)">448.00</div>
<div class="a tx cv" style="left:881.06px;top:237.91px;font-size:8.10px;line-height:9.05px;color:#386fb5;transform:scaleX(0.8450)">448.00</div>
<div class="a tx cv" style="left:921.36px;top:237.91px;font-size:8.10px;line-height:9.05px;color:#386fb5;transform:scaleX(0.8450)">448.00</div>
<div class="a tx cv" style="left:965.86px;top:237.91px;font-size:8.10px;line-height:9.05px;color:#386fb5;transform:scaleX(0.8450)">448.00</div>
<div class="a tx cv" style="left:36.00px;top:248.71px;font-size:8.20px;line-height:9.16px;color:#386fb5;transform:scaleX(0.8944)">Product 80</div>
<div class="a tx cv" style="left:194.56px;top:248.80px;font-size:8.10px;line-height:9.05px;color:#386fb5;transform:scaleX(0.8450)">256.00</div>
<div class="a tx cv" style="left:234.86px;top:248.80px;font-size:8.10px;line-height:9.05px;color:#386fb5;transform:scaleX(0.8450)">256.00</div>
<div class="a tx cv" style="left:275.36px;top:248.80px;font-size:8.10px;line-height:9.05px;color:#386fb5;transform:scaleX(0.8450)">256.00</div>
<div class="a tx cv" style="left:321.06px;top:248.80px;font-size:8.10px;line-height:9.05px;color:#386fb5;transform:scaleX(0.8450)">256.00</div>
<div class="a tx cv" style="left:362.76px;top:248.80px;font-size:8.10px;line-height:9.05px;color:#386fb5;transform:scaleX(0.8450)">256.00</div>
<div class="a tx cv" style="left:403.46px;top:248.80px;font-size:8.10px;line-height:9.05px;color:#386fb5;transform:scaleX(0.8450)">256.00</div>
<div class="a tx cv" style="left:443.86px;top:248.80px;font-size:8.10px;line-height:9.05px;color:#386fb5;transform:scaleX(0.8450)">256.00</div>
<div class="a tx cv" style="left:488.26px;top:248.80px;font-size:8.10px;line-height:9.05px;color:#386fb5;transform:scaleX(0.8450)">256.00</div>
<div class="a tx cv" style="left:532.06px;top:248.80px;font-size:8.10px;line-height:9.05px;color:#386fb5;transform:scaleX(0.8450)">256.00</div>
<div class="a tx cv" style="left:573.06px;top:248.80px;font-size:8.10px;line-height:9.05px;color:#386fb5;transform:scaleX(0.8450)">256.00</div>
<div class="a tx cv" style="left:617.86px;top:248.80px;font-size:8.10px;line-height:9.05px;color:#386fb5;transform:scaleX(0.8450)">256.00</div>
<div class="a tx cv" style="left:660.56px;top:248.80px;font-size:8.10px;line-height:9.05px;color:#386fb5;transform:scaleX(0.8450)">256.00</div>
<div class="a tx cv" style="left:704.86px;top:248.80px;font-size:8.10px;line-height:9.05px;color:#386fb5;transform:scaleX(0.8450)">256.00</div>
<div class="a tx cv" style="left:747.06px;top:248.80px;font-size:8.10px;line-height:9.05px;color:#386fb5;transform:scaleX(0.8450)">256.00</div>
<div class="a tx cv" style="left:792.86px;top:248.80px;font-size:8.10px;line-height:9.05px;color:#386fb5;transform:scaleX(0.8450)">256.00</div>
<div class="a tx cv" style="left:835.66px;top:248.80px;font-size:8.10px;line-height:9.05px;color:#386fb5;transform:scaleX(0.8450)">256.00</div>
<div class="a tx cv" style="left:881.06px;top:248.80px;font-size:8.10px;line-height:9.05px;color:#386fb5;transform:scaleX(0.8450)">256.00</div>
<div class="a tx cv" style="left:921.36px;top:248.80px;font-size:8.10px;line-height:9.05px;color:#386fb5;transform:scaleX(0.8450)">256.00</div>
<div class="a tx cv" style="left:965.86px;top:248.80px;font-size:8.10px;line-height:9.05px;color:#386fb5;transform:scaleX(0.8450)">256.00</div>
<div class="a tx " style="left:24.00px;top:281.90px;font-size:7.40px;line-height:8.27px;color:#222;transform:scaleX(0.9155);font-weight:bold">Revenue</div>
<div class="a tx cv" style="left:36.00px;top:303.16px;font-size:8.20px;line-height:9.16px;color:#386fb5;transform:scaleX(0.8944)">Product 1</div>
<div class="a tx cv" style="left:195.07px;top:303.25px;font-size:8.10px;line-height:9.05px;color:#386fb5;transform:scaleX(0.8450)">11,760</div>
<div class="a tx cv" style="left:235.37px;top:303.25px;font-size:8.10px;line-height:9.05px;color:#386fb5;transform:scaleX(0.8450)">11,760</div>
<div class="a tx cv" style="left:275.87px;top:303.25px;font-size:8.10px;line-height:9.05px;color:#386fb5;transform:scaleX(0.8450)">11,760</div>
<div class="a tx cv" style="left:321.57px;top:303.25px;font-size:8.10px;line-height:9.05px;color:#386fb5;transform:scaleX(0.8450)">11,760</div>
<div class="a tx cv" style="left:362.76px;top:303.25px;font-size:8.10px;line-height:9.05px;color:#386fb5;transform:scaleX(0.8450)">12,936</div>
<div class="a tx cv" style="left:403.46px;top:303.25px;font-size:8.10px;line-height:9.05px;color:#386fb5;transform:scaleX(0.8450)">12,936</div>
<div class="a tx cv" style="left:443.86px;top:303.25px;font-size:8.10px;line-height:9.05px;color:#386fb5;transform:scaleX(0.8450)">12,936</div>
<div class="a tx cv" style="left:488.26px;top:303.25px;font-size:8.10px;line-height:9.05px;color:#386fb5;transform:scaleX(0.8450)">12,936</div>
<div class="a tx cv" style="left:532.06px;top:303.25px;font-size:8.10px;line-height:9.05px;color:#386fb5;transform:scaleX(0.8450)">12,936</div>
<div class="a tx cv" style="left:573.06px;top:303.25px;font-size:8.10px;line-height:9.05px;color:#386fb5;transform:scaleX(0.8450)">12,936</div>
<div class="a tx cv" style="left:617.86px;top:303.25px;font-size:8.10px;line-height:9.05px;color:#386fb5;transform:scaleX(0.8450)">12,936</div>
<div class="a tx cv" style="left:660.56px;top:303.25px;font-size:8.10px;line-height:9.05px;color:#386fb5;transform:scaleX(0.8450)">12,936</div>
<div class="a tx cv" style="left:704.86px;top:303.25px;font-size:8.10px;line-height:9.05px;color:#386fb5;transform:scaleX(0.8450)">12,936</div>
<div class="a tx cv" style="left:747.06px;top:303.25px;font-size:8.10px;line-height:9.05px;color:#386fb5;transform:scaleX(0.8450)">12,936</div>
<div class="a tx cv" style="left:792.86px;top:303.25px;font-size:8.10px;line-height:9.05px;color:#386fb5;transform:scaleX(0.8450)">12,936</div>
<div class="a tx cv" style="left:835.66px;top:303.25px;font-size:8.10px;line-height:9.05px;color:#386fb5;transform:scaleX(0.8450)">12,936</div>
<div class="a tx cv" style="left:881.57px;top:303.25px;font-size:8.10px;line-height:9.05px;color:#386fb5;transform:scaleX(0.8450)">14,112</div>
<div class="a tx cv" style="left:921.87px;top:303.25px;font-size:8.10px;line-height:9.05px;color:#386fb5;transform:scaleX(0.8450)">14,112</div>
<div class="a tx cv" style="left:966.37px;top:303.25px;font-size:8.10px;line-height:9.05px;color:#386fb5;transform:scaleX(0.8450)">14,112</div>
<div class="a tx cv" style="left:36.00px;top:314.05px;font-size:8.20px;line-height:9.16px;color:#386fb5;transform:scaleX(0.8944)">Product 2</div>
<div class="a tx cv" style="left:195.07px;top:314.14px;font-size:8.10px;line-height:9.05px;color:#386fb5;transform:scaleX(0.8450)">14,112</div>
<div class="a tx cv" style="left:235.37px;top:314.14px;font-size:8.10px;line-height:9.05px;color:#386fb5;transform:scaleX(0.8450)">14,112</div>
<div class="a tx cv" style="left:275.87px;top:314.14px;font-size:8.10px;line-height:9.05px;color:#386fb5;transform:scaleX(0.8450)">14,112</div>
<div class="a tx cv" style="left:321.57px;top:314.14px;font-size:8.10px;line-height:9.05px;color:#386fb5;transform:scaleX(0.8450)">14,112</div>
<div class="a tx cv" style="left:362.76px;top:314.14px;font-size:8.10px;line-height:9.05px;color:#386fb5;transform:scaleX(0.8450)">15,288</div>
<div class="a tx cv" style="left:403.46px;top:314.14px;font-size:8.10px;line-height:9.05px;color:#386fb5;transform:scaleX(0.8450)">15,288</div>
<div class="a tx cv" style="left:443.86px;top:314.14px;font-size:8.10px;line-height:9.05px;color:#386fb5;transform:scaleX(0.8450)">15,288</div>
<div class="a tx cv" style="left:488.26px;top:314.14px;font-size:8.10px;line-height:9.05px;color:#386fb5;transform:scaleX(0.8450)">15,288</div>
<div class="a tx cv" style="left:532.06px;top:314.14px;font-size:8.10px;line-height:9.05px;color:#386fb5;transform:scaleX(0.8450)">15,288</div>
<div class="a tx cv" style="left:573.06px;top:314.14px;font-size:8.10px;line-height:9.05px;color:#386fb5;transform:scaleX(0.8450)">15,288</div>
<div class="a tx cv" style="left:617.86px;top:314.14px;font-size:8.10px;line-height:9.05px;color:#386fb5;transform:scaleX(0.8450)">15,288</div>
<div class="a tx cv" style="left:660.56px;top:314.14px;font-size:8.10px;line-height:9.05px;color:#386fb5;transform:scaleX(0.8450)">15,288</div>
<div class="a tx cv" style="left:704.86px;top:314.14px;font-size:8.10px;line-height:9.05px;color:#386fb5;transform:scaleX(0.8450)">15,288</div>
<div class="a tx cv" style="left:747.06px;top:314.14px;font-size:8.10px;line-height:9.05px;color:#386fb5;transform:scaleX(0.8450)">15,288</div>
<div class="a tx cv" style="left:792.86px;top:314.14px;font-size:8.10px;line-height:9.05px;color:#386fb5;transform:scaleX(0.8450)">15,288</div>
<div class="a tx cv" style="left:835.66px;top:314.14px;font-size:8.10px;line-height:9.05px;color:#386fb5;transform:scaleX(0.8450)">15,288</div>
<div class="a tx cv" style="left:881.06px;top:314.14px;font-size:8.10px;line-height:9.05px;color:#386fb5;transform:scaleX(0.8450)">15,288</div>
<div class="a tx cv" style="left:921.36px;top:314.14px;font-size:8.10px;line-height:9.05px;color:#386fb5;transform:scaleX(0.8450)">15,288</div>
<div class="a tx cv" style="left:965.86px;top:314.14px;font-size:8.10px;line-height:9.05px;color:#386fb5;transform:scaleX(0.8450)">15,288</div>
<div class="a tx cv" style="left:36.00px;top:324.94px;font-size:8.20px;line-height:9.16px;color:#386fb5;transform:scaleX(0.8944)">Product 3</div>
<div class="a tx cv" style="left:194.56px;top:325.03px;font-size:8.10px;line-height:9.05px;color:#386fb5;transform:scaleX(0.8450)">23,520</div>
<div class="a tx cv" style="left:234.86px;top:325.03px;font-size:8.10px;line-height:9.05px;color:#386fb5;transform:scaleX(0.8450)">23,520</div>
<div class="a tx cv" style="left:275.36px;top:325.03px;font-size:8.10px;line-height:9.05px;color:#386fb5;transform:scaleX(0.8450)">23,520</div>
<div class="a tx cv" style="left:321.06px;top:325.03px;font-size:8.10px;line-height:9.05px;color:#386fb5;transform:scaleX(0.8450)">23,520</div>
<div class="a tx cv" style="left:362.76px;top:325.03px;font-size:8.10px;line-height:9.05px;color:#386fb5;transform:scaleX(0.8450)">25,872</div>
<div class="a tx cv" style="left:403.46px;top:325.03px;font-size:8.10px;line-height:9.05px;color:#386fb5;transform:scaleX(0.8450)">25,872</div>
<div class="a tx cv" style="left:443.86px;top:325.03px;font-size:8.10px;line-height:9.05px;color:#386fb5;transform:scaleX(0.8450)">25,872</div>
<div class="a tx cv" style="left:488.26px;top:325.03px;font-size:8.10px;line-height:9.05px;color:#386fb5;transform:scaleX(0.8450)">25,872</div>
<div class="a tx cv" style="left:532.06px;top:325.03px;font-size:8.10px;line-height:9.05px;color:#386fb5;transform:scaleX(0.8450)">25,872</div>
<div class="a tx cv" style="left:573.06px;top:325.03px;font-size:8.10px;line-height:9.05px;color:#386fb5;transform:scaleX(0.8450)">25,872</div>
<div class="a tx cv" style="left:617.86px;top:325.03px;font-size:8.10px;line-height:9.05px;color:#386fb5;transform:scaleX(0.8450)">25,872</div>
<div class="a tx cv" style="left:660.56px;top:325.03px;font-size:8.10px;line-height:9.05px;color:#386fb5;transform:scaleX(0.8450)">25,872</div>
<div class="a tx cv" style="left:704.86px;top:325.03px;font-size:8.10px;line-height:9.05px;color:#386fb5;transform:scaleX(0.8450)">25,872</div>
<div class="a tx cv" style="left:747.06px;top:325.03px;font-size:8.10px;line-height:9.05px;color:#386fb5;transform:scaleX(0.8450)">25,872</div>
<div class="a tx cv" style="left:792.86px;top:325.03px;font-size:8.10px;line-height:9.05px;color:#386fb5;transform:scaleX(0.8450)">25,872</div>
<div class="a tx cv" style="left:835.66px;top:325.03px;font-size:8.10px;line-height:9.05px;color:#386fb5;transform:scaleX(0.8450)">25,872</div>
<div class="a tx cv" style="left:881.06px;top:325.03px;font-size:8.10px;line-height:9.05px;color:#386fb5;transform:scaleX(0.8450)">23,520</div>
<div class="a tx cv" style="left:921.36px;top:325.03px;font-size:8.10px;line-height:9.05px;color:#386fb5;transform:scaleX(0.8450)">23,520</div>
<div class="a tx cv" style="left:965.86px;top:325.03px;font-size:8.10px;line-height:9.05px;color:#386fb5;transform:scaleX(0.8450)">23,520</div>
<div class="a tx cv" style="left:36.00px;top:335.83px;font-size:8.20px;line-height:9.16px;color:#386fb5;transform:scaleX(0.8944)">Product 4</div>
<div class="a tx cv" style="left:194.56px;top:335.92px;font-size:8.10px;line-height:9.05px;color:#386fb5;transform:scaleX(0.8450)">26,200</div>
<div class="a tx cv" style="left:234.86px;top:335.92px;font-size:8.10px;line-height:9.05px;color:#386fb5;transform:scaleX(0.8450)">26,200</div>
<div class="a tx cv" style="left:275.36px;top:335.92px;font-size:8.10px;line-height:9.05px;color:#386fb5;transform:scaleX(0.8450)">26,200</div>
<div class="a tx cv" style="left:321.06px;top:335.92px;font-size:8.10px;line-height:9.05px;color:#386fb5;transform:scaleX(0.8450)">26,200</div>
<div class="a tx cv" style="left:362.76px;top:335.92px;font-size:8.10px;line-height:9.05px;color:#386fb5;transform:scaleX(0.8450)">28,296</div>
<div class="a tx cv" style="left:403.46px;top:335.92px;font-size:8.10px;line-height:9.05px;color:#386fb5;transform:scaleX(0.8450)">28,296</div>
<div class="a tx cv" style="left:443.86px;top:335.92px;font-size:8.10px;line-height:9.05px;color:#386fb5;transform:scaleX(0.8450)">28,296</div>
<div class="a tx cv" style="left:488.26px;top:335.92px;font-size:8.10px;line-height:9.05px;color:#386fb5;transform:scaleX(0.8450)">28,296</div>
<div class="a tx cv" style="left:532.06px;top:335.92px;font-size:8.10px;line-height:9.05px;color:#386fb5;transform:scaleX(0.8450)">28,296</div>
<div class="a tx cv" style="left:573.06px;top:335.92px;font-size:8.10px;line-height:9.05px;color:#386fb5;transform:scaleX(0.8450)">28,296</div>
<div class="a tx cv" style="left:617.86px;top:335.92px;font-size:8.10px;line-height:9.05px;color:#386fb5;transform:scaleX(0.8450)">28,296</div>
<div class="a tx cv" style="left:660.56px;top:335.92px;font-size:8.10px;line-height:9.05px;color:#386fb5;transform:scaleX(0.8450)">28,296</div>
<div class="a tx cv" style="left:704.86px;top:335.92px;font-size:8.10px;line-height:9.05px;color:#386fb5;transform:scaleX(0.8450)">28,296</div>
<div class="a tx cv" style="left:747.06px;top:335.92px;font-size:8.10px;line-height:9.05px;color:#386fb5;transform:scaleX(0.8450)">28,296</div>
<div class="a tx cv" style="left:792.86px;top:335.92px;font-size:8.10px;line-height:9.05px;color:#386fb5;transform:scaleX(0.8450)">28,296</div>
<div class="a tx cv" style="left:835.66px;top:335.92px;font-size:8.10px;line-height:9.05px;color:#386fb5;transform:scaleX(0.8450)">28,296</div>
<div class="a tx cv" style="left:881.06px;top:335.92px;font-size:8.10px;line-height:9.05px;color:#386fb5;transform:scaleX(0.8450)">28,296</div>
<div class="a tx cv" style="left:921.36px;top:335.92px;font-size:8.10px;line-height:9.05px;color:#386fb5;transform:scaleX(0.8450)">28,296</div>
<div class="a tx cv" style="left:965.86px;top:335.92px;font-size:8.10px;line-height:9.05px;color:#386fb5;transform:scaleX(0.8450)">28,296</div>
<div class="a tx cv" style="left:36.00px;top:346.72px;font-size:8.20px;line-height:9.16px;color:#386fb5;transform:scaleX(0.8944)">Product 5</div>
<div class="a tx cv" style="left:194.56px;top:346.81px;font-size:8.10px;line-height:9.05px;color:#386fb5;transform:scaleX(0.8450)">27,248</div>
<div class="a tx cv" style="left:234.86px;top:346.81px;font-size:8.10px;line-height:9.05px;color:#386fb5;transform:scaleX(0.8450)">27,248</div>
<div class="a tx cv" style="left:275.36px;top:346.81px;font-size:8.10px;line-height:9.05px;color:#386fb5;transform:scaleX(0.8450)">27,248</div>
<div class="a tx cv" style="left:321.06px;top:346.81px;font-size:8.10px;line-height:9.05px;color:#386fb5;transform:scaleX(0.8450)">27,248</div>
<div class="a tx cv" style="left:362.76px;top:346.81px;font-size:8.10px;line-height:9.05px;color:#386fb5;transform:scaleX(0.8450)">28,296</div>
<div class="a tx cv" style="left:403.46px;top:346.81px;font-size:8.10px;line-height:9.05px;color:#386fb5;transform:scaleX(0.8450)">28,296</div>
<div class="a tx cv" style="left:443.86px;top:346.81px;font-size:8.10px;line-height:9.05px;color:#386fb5;transform:scaleX(0.8450)">28,296</div>
<div class="a tx cv" style="left:488.26px;top:346.81px;font-size:8.10px;line-height:9.05px;color:#386fb5;transform:scaleX(0.8450)">28,296</div>
<div class="a tx cv" style="left:532.06px;top:346.81px;font-size:8.10px;line-height:9.05px;color:#386fb5;transform:scaleX(0.8450)">28,296</div>
<div class="a tx cv" style="left:573.06px;top:346.81px;font-size:8.10px;line-height:9.05px;color:#386fb5;transform:scaleX(0.8450)">28,296</div>
<div class="a tx cv" style="left:617.86px;top:346.81px;font-size:8.10px;line-height:9.05px;color:#386fb5;transform:scaleX(0.8450)">28,296</div>
<div class="a tx cv" style="left:660.56px;top:346.81px;font-size:8.10px;line-height:9.05px;color:#386fb5;transform:scaleX(0.8450)">28,296</div>
<div class="a tx cv" style="left:704.86px;top:346.81px;font-size:8.10px;line-height:9.05px;color:#386fb5;transform:scaleX(0.8450)">28,296</div>
<div class="a tx cv" style="left:747.06px;top:346.81px;font-size:8.10px;line-height:9.05px;color:#386fb5;transform:scaleX(0.8450)">28,296</div>
<div class="a tx cv" style="left:792.86px;top:346.81px;font-size:8.10px;line-height:9.05px;color:#386fb5;transform:scaleX(0.8450)">28,296</div>
<div class="a tx cv" style="left:835.66px;top:346.81px;font-size:8.10px;line-height:9.05px;color:#386fb5;transform:scaleX(0.8450)">28,296</div>
<div class="a tx cv" style="left:881.06px;top:346.81px;font-size:8.10px;line-height:9.05px;color:#386fb5;transform:scaleX(0.8450)">28,296</div>
<div class="a tx cv" style="left:921.36px;top:346.81px;font-size:8.10px;line-height:9.05px;color:#386fb5;transform:scaleX(0.8450)">28,296</div>
<div class="a tx cv" style="left:965.86px;top:346.81px;font-size:8.10px;line-height:9.05px;color:#386fb5;transform:scaleX(0.8450)">28,296</div>
<div class="a tx cv" style="left:36.00px;top:357.61px;font-size:8.20px;line-height:9.16px;color:#386fb5;transform:scaleX(0.8944)">Product 6</div>
<div class="a tx cv" style="left:194.56px;top:357.70px;font-size:8.10px;line-height:9.05px;color:#386fb5;transform:scaleX(0.8450)">20,960</div>
<div class="a tx cv" style="left:234.86px;top:357.70px;font-size:8.10px;line-height:9.05px;color:#386fb5;transform:scaleX(0.8450)">20,960</div>
<div class="a tx cv" style="left:275.36px;top:357.70px;font-size:8.10px;line-height:9.05px;color:#386fb5;transform:scaleX(0.8450)">20,960</div>
<div class="a tx cv" style="left:321.06px;top:357.70px;font-size:8.10px;line-height:9.05px;color:#386fb5;transform:scaleX(0.8450)">20,960</div>
<div class="a tx cv" style="left:362.76px;top:357.70px;font-size:8.10px;line-height:9.05px;color:#386fb5;transform:scaleX(0.8450)">20,960</div>
<div class="a tx cv" style="left:403.46px;top:357.70px;font-size:8.10px;line-height:9.05px;color:#386fb5;transform:scaleX(0.8450)">20,960</div>
<div class="a tx cv" style="left:443.86px;top:357.70px;font-size:8.10px;line-height:9.05px;color:#386fb5;transform:scaleX(0.8450)">20,960</div>
<div class="a tx cv" style="left:488.26px;top:357.70px;font-size:8.10px;line-height:9.05px;color:#386fb5;transform:scaleX(0.8450)">20,960</div>
<div class="a tx cv" style="left:532.06px;top:357.70px;font-size:8.10px;line-height:9.05px;color:#386fb5;transform:scaleX(0.8450)">20,960</div>
<div class="a tx cv" style="left:573.06px;top:357.70px;font-size:8.10px;line-height:9.05px;color:#386fb5;transform:scaleX(0.8450)">20,960</div>
<div class="a tx cv" style="left:617.86px;top:357.70px;font-size:8.10px;line-height:9.05px;color:#386fb5;transform:scaleX(0.8450)">20,960</div>
<div class="a tx cv" style="left:660.56px;top:357.70px;font-size:8.10px;line-height:9.05px;color:#386fb5;transform:scaleX(0.8450)">20,960</div>
<div class="a tx cv" style="left:704.86px;top:357.70px;font-size:8.10px;line-height:9.05px;color:#386fb5;transform:scaleX(0.8450)">20,960</div>
<div class="a tx cv" style="left:747.06px;top:357.70px;font-size:8.10px;line-height:9.05px;color:#386fb5;transform:scaleX(0.8450)">20,960</div>
<div class="a tx cv" style="left:792.86px;top:357.70px;font-size:8.10px;line-height:9.05px;color:#386fb5;transform:scaleX(0.8450)">20,960</div>
<div class="a tx cv" style="left:835.66px;top:357.70px;font-size:8.10px;line-height:9.05px;color:#386fb5;transform:scaleX(0.8450)">20,960</div>
<div class="a tx cv" style="left:881.06px;top:357.70px;font-size:8.10px;line-height:9.05px;color:#386fb5;transform:scaleX(0.8450)">20,960</div>
<div class="a tx cv" style="left:921.36px;top:357.70px;font-size:8.10px;line-height:9.05px;color:#386fb5;transform:scaleX(0.8450)">20,960</div>
<div class="a tx cv" style="left:965.86px;top:357.70px;font-size:8.10px;line-height:9.05px;color:#386fb5;transform:scaleX(0.8450)">20,960</div>
<div class="a tx cv" style="left:36.00px;top:368.50px;font-size:8.20px;line-height:9.16px;color:#386fb5;transform:scaleX(0.8944)">Product 7</div>
<div class="a tx cv" style="left:194.56px;top:368.59px;font-size:8.10px;line-height:9.05px;color:#386fb5;transform:scaleX(0.8450)">31,440</div>
<div class="a tx cv" style="left:234.86px;top:368.59px;font-size:8.10px;line-height:9.05px;color:#386fb5;transform:scaleX(0.8450)">31,440</div>
<div class="a tx cv" style="left:275.36px;top:368.59px;font-size:8.10px;line-height:9.05px;color:#386fb5;transform:scaleX(0.8450)">31,440</div>
<div class="a tx cv" style="left:321.06px;top:368.59px;font-size:8.10px;line-height:9.05px;color:#386fb5;transform:scaleX(0.8450)">31,440</div>
<div class="a tx cv" style="left:362.76px;top:368.59px;font-size:8.10px;line-height:9.05px;color:#386fb5;transform:scaleX(0.8450)">31,440</div>
<div class="a tx cv" style="left:403.46px;top:368.59px;font-size:8.10px;line-height:9.05px;color:#386fb5;transform:scaleX(0.8450)">31,440</div>
<div class="a tx cv" style="left:443.86px;top:368.59px;font-size:8.10px;line-height:9.05px;color:#386fb5;transform:scaleX(0.8450)">31,440</div>
<div class="a tx cv" style="left:488.26px;top:368.59px;font-size:8.10px;line-height:9.05px;color:#386fb5;transform:scaleX(0.8450)">31,440</div>
<div class="a tx cv" style="left:532.06px;top:368.59px;font-size:8.10px;line-height:9.05px;color:#386fb5;transform:scaleX(0.8450)">31,440</div>
<div class="a tx cv" style="left:573.06px;top:368.59px;font-size:8.10px;line-height:9.05px;color:#386fb5;transform:scaleX(0.8450)">31,440</div>
<div class="a tx cv" style="left:617.86px;top:368.59px;font-size:8.10px;line-height:9.05px;color:#386fb5;transform:scaleX(0.8450)">31,440</div>
<div class="a tx cv" style="left:660.56px;top:368.59px;font-size:8.10px;line-height:9.05px;color:#386fb5;transform:scaleX(0.8450)">31,440</div>
<div class="a tx cv" style="left:704.86px;top:368.59px;font-size:8.10px;line-height:9.05px;color:#386fb5;transform:scaleX(0.8450)">31,440</div>
<div class="a tx cv" style="left:747.06px;top:368.59px;font-size:8.10px;line-height:9.05px;color:#386fb5;transform:scaleX(0.8450)">31,440</div>
<div class="a tx cv" style="left:792.86px;top:368.59px;font-size:8.10px;line-height:9.05px;color:#386fb5;transform:scaleX(0.8450)">31,440</div>
<div class="a tx cv" style="left:835.66px;top:368.59px;font-size:8.10px;line-height:9.05px;color:#386fb5;transform:scaleX(0.8450)">31,440</div>
<div class="a tx cv" style="left:881.06px;top:368.59px;font-size:8.10px;line-height:9.05px;color:#386fb5;transform:scaleX(0.8450)">31,440</div>
<div class="a tx cv" style="left:921.36px;top:368.59px;font-size:8.10px;line-height:9.05px;color:#386fb5;transform:scaleX(0.8450)">31,440</div>
<div class="a tx cv" style="left:965.86px;top:368.59px;font-size:8.10px;line-height:9.05px;color:#386fb5;transform:scaleX(0.8450)">31,440</div>
<div class="a tx cv" style="left:36.00px;top:379.39px;font-size:8.20px;line-height:9.16px;color:#386fb5;transform:scaleX(0.8944)">Product 8</div>
<div class="a tx cv" style="left:194.56px;top:379.48px;font-size:8.10px;line-height:9.05px;color:#386fb5;transform:scaleX(0.8450)">39,824</div>
<div class="a tx cv" style="left:234.86px;top:379.48px;font-size:8.10px;line-height:9.05px;color:#386fb5;transform:scaleX(0.8450)">39,824</div>
<div class="a tx cv" style="left:275.36px;top:379.48px;font-size:8.10px;line-height:9.05px;color:#386fb5;transform:scaleX(0.8450)">39,824</div>
<div class="a tx cv" style="left:321.06px;top:379.48px;font-size:8.10px;line-height:9.05px;color:#386fb5;transform:scaleX(0.8450)">39,824</div>
<div class="a tx cv" style="left:362.76px;top:379.48px;font-size:8.10px;line-height:9.05px;color:#386fb5;transform:scaleX(0.8450)">39,824</div>
<div class="a tx cv" style="left:403.46px;top:379.48px;font-size:8.10px;line-height:9.05px;color:#386fb5;transform:scaleX(0.8450)">39,824</div>
<div class="a tx cv" style="left:443.86px;top:379.48px;font-size:8.10px;line-height:9.05px;color:#386fb5;transform:scaleX(0.8450)">39,824</div>
<div class="a tx cv" style="left:488.26px;top:379.48px;font-size:8.10px;line-height:9.05px;color:#386fb5;transform:scaleX(0.8450)">39,824</div>
<div class="a tx cv" style="left:532.06px;top:379.48px;font-size:8.10px;line-height:9.05px;color:#386fb5;transform:scaleX(0.8450)">39,824</div>
<div class="a tx cv" style="left:573.06px;top:379.48px;font-size:8.10px;line-height:9.05px;color:#386fb5;transform:scaleX(0.8450)">39,824</div>
<div class="a tx cv" style="left:617.86px;top:379.48px;font-size:8.10px;line-height:9.05px;color:#386fb5;transform:scaleX(0.8450)">39,824</div>
<div class="a tx cv" style="left:660.56px;top:379.48px;font-size:8.10px;line-height:9.05px;color:#386fb5;transform:scaleX(0.8450)">39,824</div>
<div class="a tx cv" style="left:704.86px;top:379.48px;font-size:8.10px;line-height:9.05px;color:#386fb5;transform:scaleX(0.8450)">39,824</div>
<div class="a tx cv" style="left:747.06px;top:379.48px;font-size:8.10px;line-height:9.05px;color:#386fb5;transform:scaleX(0.8450)">39,824</div>
<div class="a tx cv" style="left:792.86px;top:379.48px;font-size:8.10px;line-height:9.05px;color:#386fb5;transform:scaleX(0.8450)">39,824</div>
<div class="a tx cv" style="left:835.66px;top:379.48px;font-size:8.10px;line-height:9.05px;color:#386fb5;transform:scaleX(0.8450)">39,824</div>
<div class="a tx cv" style="left:881.06px;top:379.48px;font-size:8.10px;line-height:9.05px;color:#386fb5;transform:scaleX(0.8450)">39,824</div>
<div class="a tx cv" style="left:921.36px;top:379.48px;font-size:8.10px;line-height:9.05px;color:#386fb5;transform:scaleX(0.8450)">39,824</div>
<div class="a tx cv" style="left:965.86px;top:379.48px;font-size:8.10px;line-height:9.05px;color:#386fb5;transform:scaleX(0.8450)">39,824</div>
<div class="a tx cv" style="left:36.00px;top:390.28px;font-size:8.20px;line-height:9.16px;color:#386fb5;transform:scaleX(0.8944)">Product 9</div>
<div class="a tx cv" style="left:194.56px;top:390.37px;font-size:8.10px;line-height:9.05px;color:#386fb5;transform:scaleX(0.8450)">38,808</div>
<div class="a tx cv" style="left:234.86px;top:390.37px;font-size:8.10px;line-height:9.05px;color:#386fb5;transform:scaleX(0.8450)">38,808</div>
<div class="a tx cv" style="left:275.36px;top:390.37px;font-size:8.10px;line-height:9.05px;color:#386fb5;transform:scaleX(0.8450)">38,808</div>
<div class="a tx cv" style="left:321.06px;top:390.37px;font-size:8.10px;line-height:9.05px;color:#386fb5;transform:scaleX(0.8450)">38,808</div>
<div class="a tx cv" style="left:362.76px;top:390.37px;font-size:8.10px;line-height:9.05px;color:#386fb5;transform:scaleX(0.8450)">41,160</div>
<div class="a tx cv" style="left:403.46px;top:390.37px;font-size:8.10px;line-height:9.05px;color:#386fb5;transform:scaleX(0.8450)">41,160</div>
<div class="a tx cv" style="left:443.86px;top:390.37px;font-size:8.10px;line-height:9.05px;color:#386fb5;transform:scaleX(0.8450)">41,160</div>
<div class="a tx cv" style="left:488.26px;top:390.37px;font-size:8.10px;line-height:9.05px;color:#386fb5;transform:scaleX(0.8450)">41,160</div>
<div class="a tx cv" style="left:532.06px;top:390.37px;font-size:8.10px;line-height:9.05px;color:#386fb5;transform:scaleX(0.8450)">41,160</div>
<div class="a tx cv" style="left:573.06px;top:390.37px;font-size:8.10px;line-height:9.05px;color:#386fb5;transform:scaleX(0.8450)">41,160</div>
<div class="a tx cv" style="left:617.86px;top:390.37px;font-size:8.10px;line-height:9.05px;color:#386fb5;transform:scaleX(0.8450)">41,160</div>
<div class="a tx cv" style="left:660.56px;top:390.37px;font-size:8.10px;line-height:9.05px;color:#386fb5;transform:scaleX(0.8450)">41,160</div>
<div class="a tx cv" style="left:704.86px;top:390.37px;font-size:8.10px;line-height:9.05px;color:#386fb5;transform:scaleX(0.8450)">41,160</div>
<div class="a tx cv" style="left:747.06px;top:390.37px;font-size:8.10px;line-height:9.05px;color:#386fb5;transform:scaleX(0.8450)">41,160</div>
<div class="a tx cv" style="left:792.86px;top:390.37px;font-size:8.10px;line-height:9.05px;color:#386fb5;transform:scaleX(0.8450)">41,160</div>
<div class="a tx cv" style="left:835.66px;top:390.37px;font-size:8.10px;line-height:9.05px;color:#386fb5;transform:scaleX(0.8450)">41,160</div>
<div class="a tx cv" style="left:881.06px;top:390.37px;font-size:8.10px;line-height:9.05px;color:#386fb5;transform:scaleX(0.8450)">41,160</div>
<div class="a tx cv" style="left:921.36px;top:390.37px;font-size:8.10px;line-height:9.05px;color:#386fb5;transform:scaleX(0.8450)">41,160</div>
<div class="a tx cv" style="left:965.86px;top:390.37px;font-size:8.10px;line-height:9.05px;color:#386fb5;transform:scaleX(0.8450)">41,160</div>
<div class="a tx cv" style="left:36.00px;top:401.17px;font-size:8.20px;line-height:9.16px;color:#386fb5;transform:scaleX(0.8944)">Product 10</div>
<div class="a tx cv" style="left:194.56px;top:401.26px;font-size:8.10px;line-height:9.05px;color:#386fb5;transform:scaleX(0.8450)">23,520</div>
<div class="a tx cv" style="left:234.86px;top:401.26px;font-size:8.10px;line-height:9.05px;color:#386fb5;transform:scaleX(0.8450)">23,520</div>
<div class="a tx cv" style="left:275.36px;top:401.26px;font-size:8.10px;line-height:9.05px;color:#386fb5;transform:scaleX(0.8450)">23,520</div>
<div class="a tx cv" style="left:321.06px;top:401.26px;font-size:8.10px;line-height:9.05px;color:#386fb5;transform:scaleX(0.8450)">23,520</div>
<div class="a tx cv" style="left:362.76px;top:401.26px;font-size:8.10px;line-height:9.05px;color:#386fb5;transform:scaleX(0.8450)">23,520</div>
<div class="a tx cv" style="left:403.46px;top:401.26px;font-size:8.10px;line-height:9.05px;color:#386fb5;transform:scaleX(0.8450)">23,520</div>
<div class="a tx cv" style="left:443.86px;top:401.26px;font-size:8.10px;line-height:9.05px;color:#386fb5;transform:scaleX(0.8450)">23,520</div>
<div class="a tx cv" style="left:488.26px;top:401.26px;font-size:8.10px;line-height:9.05px;color:#386fb5;transform:scaleX(0.8450)">23,520</div>
<div class="a tx cv" style="left:532.06px;top:401.26px;font-size:8.10px;line-height:9.05px;color:#386fb5;transform:scaleX(0.8450)">23,520</div>
<div class="a tx cv" style="left:573.06px;top:401.26px;font-size:8.10px;line-height:9.05px;color:#386fb5;transform:scaleX(0.8450)">23,520</div>
<div class="a tx cv" style="left:617.86px;top:401.26px;font-size:8.10px;line-height:9.05px;color:#386fb5;transform:scaleX(0.8450)">23,520</div>
<div class="a tx cv" style="left:660.56px;top:401.26px;font-size:8.10px;line-height:9.05px;color:#386fb5;transform:scaleX(0.8450)">23,520</div>
<div class="a tx cv" style="left:704.86px;top:401.26px;font-size:8.10px;line-height:9.05px;color:#386fb5;transform:scaleX(0.8450)">23,520</div>
<div class="a tx cv" style="left:747.06px;top:401.26px;font-size:8.10px;line-height:9.05px;color:#386fb5;transform:scaleX(0.8450)">23,520</div>
<div class="a tx cv" style="left:792.86px;top:401.26px;font-size:8.10px;line-height:9.05px;color:#386fb5;transform:scaleX(0.8450)">23,520</div>
<div class="a tx cv" style="left:835.66px;top:401.26px;font-size:8.10px;line-height:9.05px;color:#386fb5;transform:scaleX(0.8450)">23,520</div>
<div class="a tx cv" style="left:881.06px;top:401.26px;font-size:8.10px;line-height:9.05px;color:#386fb5;transform:scaleX(0.8450)">23,520</div>
<div class="a tx cv" style="left:921.36px;top:401.26px;font-size:8.10px;line-height:9.05px;color:#386fb5;transform:scaleX(0.8450)">23,520</div>
<div class="a tx cv" style="left:965.86px;top:401.26px;font-size:8.10px;line-height:9.05px;color:#386fb5;transform:scaleX(0.8450)">23,520</div>
<div class="a tx cv" style="left:36.00px;top:412.06px;font-size:8.20px;line-height:9.16px;color:#386fb5;transform:scaleX(0.8944)">Product 11</div>
<div class="a tx cv" style="left:194.56px;top:412.15px;font-size:8.10px;line-height:9.05px;color:#386fb5;transform:scaleX(0.8450)">12,800</div>
<div class="a tx cv" style="left:234.86px;top:412.15px;font-size:8.10px;line-height:9.05px;color:#386fb5;transform:scaleX(0.8450)">12,800</div>
<div class="a tx cv" style="left:275.36px;top:412.15px;font-size:8.10px;line-height:9.05px;color:#386fb5;transform:scaleX(0.8450)">12,800</div>
<div class="a tx cv" style="left:321.06px;top:412.15px;font-size:8.10px;line-height:9.05px;color:#386fb5;transform:scaleX(0.8450)">12,800</div>
<div class="a tx cv" style="left:362.76px;top:412.15px;font-size:8.10px;line-height:9.05px;color:#386fb5;transform:scaleX(0.8450)">14,080</div>
<div class="a tx cv" style="left:403.46px;top:412.15px;font-size:8.10px;line-height:9.05px;color:#386fb5;transform:scaleX(0.8450)">14,080</div>
<div class="a tx cv" style="left:443.86px;top:412.15px;font-size:8.10px;line-height:9.05px;color:#386fb5;transform:scaleX(0.8450)">14,080</div>
<div class="a tx cv" style="left:488.26px;top:412.15px;font-size:8.10px;line-height:9.05px;color:#386fb5;transform:scaleX(0.8450)">14,080</div>
<div class="a tx cv" style="left:532.06px;top:412.15px;font-size:8.10px;line-height:9.05px;color:#386fb5;transform:scaleX(0.8450)">14,080</div>
<div class="a tx cv" style="left:573.06px;top:412.15px;font-size:8.10px;line-height:9.05px;color:#386fb5;transform:scaleX(0.8450)">14,080</div>
<div class="a tx cv" style="left:617.86px;top:412.15px;font-size:8.10px;line-height:9.05px;color:#386fb5;transform:scaleX(0.8450)">14,080</div>
<div class="a tx cv" style="left:660.56px;top:412.15px;font-size:8.10px;line-height:9.05px;color:#386fb5;transform:scaleX(0.8450)">14,080</div>
<div class="a tx cv" style="left:704.86px;top:412.15px;font-size:8.10px;line-height:9.05px;color:#386fb5;transform:scaleX(0.8450)">14,080</div>
<div class="a tx cv" style="left:747.06px;top:412.15px;font-size:8.10px;line-height:9.05px;color:#386fb5;transform:scaleX(0.8450)">14,080</div>
<div class="a tx cv" style="left:792.86px;top:412.15px;font-size:8.10px;line-height:9.05px;color:#386fb5;transform:scaleX(0.8450)">14,080</div>
<div class="a tx cv" style="left:835.66px;top:412.15px;font-size:8.10px;line-height:9.05px;color:#386fb5;transform:scaleX(0.8450)">14,080</div>
<div class="a tx cv" style="left:881.06px;top:412.15px;font-size:8.10px;line-height:9.05px;color:#386fb5;transform:scaleX(0.8450)">15,360</div>
<div class="a tx cv" style="left:921.36px;top:412.15px;font-size:8.10px;line-height:9.05px;color:#386fb5;transform:scaleX(0.8450)">15,360</div>
<div class="a tx cv" style="left:965.86px;top:412.15px;font-size:8.10px;line-height:9.05px;color:#386fb5;transform:scaleX(0.8450)">15,360</div>
<div class="a tx cv" style="left:36.00px;top:422.95px;font-size:8.20px;line-height:9.16px;color:#386fb5;transform:scaleX(0.8944)">Product 12</div>
<div class="a tx cv" style="left:194.56px;top:423.04px;font-size:8.10px;line-height:9.05px;color:#386fb5;transform:scaleX(0.8450)">13,440</div>
<div class="a tx cv" style="left:234.86px;top:423.04px;font-size:8.10px;line-height:9.05px;color:#386fb5;transform:scaleX(0.8450)">13,440</div>
<div class="a tx cv" style="left:275.36px;top:423.04px;font-size:8.10px;line-height:9.05px;color:#386fb5;transform:scaleX(0.8450)">13,440</div>
<div class="a tx cv" style="left:321.06px;top:423.04px;font-size:8.10px;line-height:9.05px;color:#386fb5;transform:scaleX(0.8450)">13,440</div>
<div class="a tx cv" style="left:362.76px;top:423.04px;font-size:8.10px;line-height:9.05px;color:#386fb5;transform:scaleX(0.8450)">14,560</div>
<div class="a tx cv" style="left:403.46px;top:423.04px;font-size:8.10px;line-height:9.05px;color:#386fb5;transform:scaleX(0.8450)">14,560</div>
<div class="a tx cv" style="left:443.86px;top:423.04px;font-size:8.10px;line-height:9.05px;color:#386fb5;transform:scaleX(0.8450)">14,560</div>
<div class="a tx cv" style="left:488.26px;top:423.04px;font-size:8.10px;line-height:9.05px;color:#386fb5;transform:scaleX(0.8450)">14,560</div>
<div class="a tx cv" style="left:532.06px;top:423.04px;font-size:8.10px;line-height:9.05px;color:#386fb5;transform:scaleX(0.8450)">14,560</div>
<div class="a tx cv" style="left:573.06px;top:423.04px;font-size:8.10px;line-height:9.05px;color:#386fb5;transform:scaleX(0.8450)">14,560</div>
<div class="a tx cv" style="left:617.86px;top:423.04px;font-size:8.10px;line-height:9.05px;color:#386fb5;transform:scaleX(0.8450)">14,560</div>
<div class="a tx cv" style="left:660.56px;top:423.04px;font-size:8.10px;line-height:9.05px;color:#386fb5;transform:scaleX(0.8450)">14,560</div>
<div class="a tx cv" style="left:704.86px;top:423.04px;font-size:8.10px;line-height:9.05px;color:#386fb5;transform:scaleX(0.8450)">14,560</div>
<div class="a tx cv" style="left:747.06px;top:423.04px;font-size:8.10px;line-height:9.05px;color:#386fb5;transform:scaleX(0.8450)">14,560</div>
<div class="a tx cv" style="left:792.86px;top:423.04px;font-size:8.10px;line-height:9.05px;color:#386fb5;transform:scaleX(0.8450)">14,560</div>
<div class="a tx cv" style="left:835.66px;top:423.04px;font-size:8.10px;line-height:9.05px;color:#386fb5;transform:scaleX(0.8450)">14,560</div>
<div class="a tx cv" style="left:881.06px;top:423.04px;font-size:8.10px;line-height:9.05px;color:#386fb5;transform:scaleX(0.8450)">14,560</div>
<div class="a tx cv" style="left:921.36px;top:423.04px;font-size:8.10px;line-height:9.05px;color:#386fb5;transform:scaleX(0.8450)">14,560</div>
<div class="a tx cv" style="left:965.86px;top:423.04px;font-size:8.10px;line-height:9.05px;color:#386fb5;transform:scaleX(0.8450)">14,560</div>
<div class="a tx cv" style="left:36.00px;top:433.84px;font-size:8.20px;line-height:9.16px;color:#386fb5;transform:scaleX(0.8944)">Product 13</div>
<div class="a tx cv" style="left:194.56px;top:433.93px;font-size:8.10px;line-height:9.05px;color:#386fb5;transform:scaleX(0.8450)">28,064</div>
<div class="a tx cv" style="left:234.86px;top:433.93px;font-size:8.10px;line-height:9.05px;color:#386fb5;transform:scaleX(0.8450)">28,064</div>
<div class="a tx cv" style="left:275.36px;top:433.93px;font-size:8.10px;line-height:9.05px;color:#386fb5;transform:scaleX(0.8450)">28,064</div>
<div class="a tx cv" style="left:321.06px;top:433.93px;font-size:8.10px;line-height:9.05px;color:#386fb5;transform:scaleX(0.8450)">28,064</div>
<div class="a tx cv" style="left:362.76px;top:433.93px;font-size:8.10px;line-height:9.05px;color:#386fb5;transform:scaleX(0.8450)">30,870</div>
<div class="a tx cv" style="left:403.46px;top:433.93px;font-size:8.10px;line-height:9.05px;color:#386fb5;transform:scaleX(0.8450)">30,870</div>
<div class="a tx cv" style="left:443.86px;top:433.93px;font-size:8.10px;line-height:9.05px;color:#386fb5;transform:scaleX(0.8450)">30,870</div>
<div class="a tx cv" style="left:488.26px;top:433.93px;font-size:8.10px;line-height:9.05px;color:#386fb5;transform:scaleX(0.8450)">30,870</div>
<div class="a tx cv" style="left:532.06px;top:433.93px;font-size:8.10px;line-height:9.05px;color:#386fb5;transform:scaleX(0.8450)">30,870</div>
<div class="a tx cv" style="left:573.06px;top:433.93px;font-size:8.10px;line-height:9.05px;color:#386fb5;transform:scaleX(0.8450)">30,870</div>
<div class="a tx cv" style="left:617.86px;top:433.93px;font-size:8.10px;line-height:9.05px;color:#386fb5;transform:scaleX(0.8450)">30,870</div>
<div class="a tx cv" style="left:660.56px;top:433.93px;font-size:8.10px;line-height:9.05px;color:#386fb5;transform:scaleX(0.8450)">30,870</div>
<div class="a tx cv" style="left:704.86px;top:433.93px;font-size:8.10px;line-height:9.05px;color:#386fb5;transform:scaleX(0.8450)">30,870</div>
<div class="a tx cv" style="left:747.06px;top:433.93px;font-size:8.10px;line-height:9.05px;color:#386fb5;transform:scaleX(0.8450)">30,870</div>
<div class="a tx cv" style="left:792.86px;top:433.93px;font-size:8.10px;line-height:9.05px;color:#386fb5;transform:scaleX(0.8450)">30,870</div>
<div class="a tx cv" style="left:835.66px;top:433.93px;font-size:8.10px;line-height:9.05px;color:#386fb5;transform:scaleX(0.8450)">30,870</div>
<div class="a tx cv" style="left:881.06px;top:433.93px;font-size:8.10px;line-height:9.05px;color:#386fb5;transform:scaleX(0.8450)">28,064</div>
<div class="a tx cv" style="left:921.36px;top:433.93px;font-size:8.10px;line-height:9.05px;color:#386fb5;transform:scaleX(0.8450)">28,064</div>
<div class="a tx cv" style="left:965.86px;top:433.93px;font-size:8.10px;line-height:9.05px;color:#386fb5;transform:scaleX(0.8450)">28,064</div>
<div class="a tx cv" style="left:36.00px;top:444.73px;font-size:8.20px;line-height:9.16px;color:#386fb5;transform:scaleX(0.8944)">Product 14</div>
<div class="a tx cv" style="left:194.56px;top:444.82px;font-size:8.10px;line-height:9.05px;color:#386fb5;transform:scaleX(0.8450)">35,080</div>
<div class="a tx cv" style="left:234.86px;top:444.82px;font-size:8.10px;line-height:9.05px;color:#386fb5;transform:scaleX(0.8450)">35,080</div>
<div class="a tx cv" style="left:275.36px;top:444.82px;font-size:8.10px;line-height:9.05px;color:#386fb5;transform:scaleX(0.8450)">35,080</div>
<div class="a tx cv" style="left:321.06px;top:444.82px;font-size:8.10px;line-height:9.05px;color:#386fb5;transform:scaleX(0.8450)">35,080</div>
<div class="a tx cv" style="left:362.76px;top:444.82px;font-size:8.10px;line-height:9.05px;color:#386fb5;transform:scaleX(0.8450)">37,888</div>
<div class="a tx cv" style="left:403.46px;top:444.82px;font-size:8.10px;line-height:9.05px;color:#386fb5;transform:scaleX(0.8450)">37,888</div>
<div class="a tx cv" style="left:443.86px;top:444.82px;font-size:8.10px;line-height:9.05px;color:#386fb5;transform:scaleX(0.8450)">37,888</div>
<div class="a tx cv" style="left:488.26px;top:444.82px;font-size:8.10px;line-height:9.05px;color:#386fb5;transform:scaleX(0.8450)">37,888</div>
<div class="a tx cv" style="left:532.06px;top:444.82px;font-size:8.10px;line-height:9.05px;color:#386fb5;transform:scaleX(0.8450)">37,888</div>
<div class="a tx cv" style="left:573.06px;top:444.82px;font-size:8.10px;line-height:9.05px;color:#386fb5;transform:scaleX(0.8450)">37,888</div>
<div class="a tx cv" style="left:617.86px;top:444.82px;font-size:8.10px;line-height:9.05px;color:#386fb5;transform:scaleX(0.8450)">37,888</div>
<div class="a tx cv" style="left:660.56px;top:444.82px;font-size:8.10px;line-height:9.05px;color:#386fb5;transform:scaleX(0.8450)">37,888</div>
<div class="a tx cv" style="left:704.86px;top:444.82px;font-size:8.10px;line-height:9.05px;color:#386fb5;transform:scaleX(0.8450)">37,888</div>
<div class="a tx cv" style="left:747.06px;top:444.82px;font-size:8.10px;line-height:9.05px;color:#386fb5;transform:scaleX(0.8450)">37,888</div>
<div class="a tx cv" style="left:792.86px;top:444.82px;font-size:8.10px;line-height:9.05px;color:#386fb5;transform:scaleX(0.8450)">37,888</div>
<div class="a tx cv" style="left:835.66px;top:444.82px;font-size:8.10px;line-height:9.05px;color:#386fb5;transform:scaleX(0.8450)">37,888</div>
<div class="a tx cv" style="left:881.06px;top:444.82px;font-size:8.10px;line-height:9.05px;color:#386fb5;transform:scaleX(0.8450)">37,888</div>
<div class="a tx cv" style="left:921.36px;top:444.82px;font-size:8.10px;line-height:9.05px;color:#386fb5;transform:scaleX(0.8450)">37,888</div>
<div class="a tx cv" style="left:965.86px;top:444.82px;font-size:8.10px;line-height:9.05px;color:#386fb5;transform:scaleX(0.8450)">37,888</div>
<div class="a tx cv" style="left:36.00px;top:455.62px;font-size:8.20px;line-height:9.16px;color:#386fb5;transform:scaleX(0.8944)">Product 15</div>
<div class="a tx cv" style="left:194.56px;top:455.71px;font-size:8.10px;line-height:9.05px;color:#386fb5;transform:scaleX(0.8450)">28,163</div>
<div class="a tx cv" style="left:234.86px;top:455.71px;font-size:8.10px;line-height:9.05px;color:#386fb5;transform:scaleX(0.8450)">28,163</div>
<div class="a tx cv" style="left:275.36px;top:455.71px;font-size:8.10px;line-height:9.05px;color:#386fb5;transform:scaleX(0.8450)">28,163</div>
<div class="a tx cv" style="left:321.06px;top:455.71px;font-size:8.10px;line-height:9.05px;color:#386fb5;transform:scaleX(0.8450)">28,163</div>
<div class="a tx cv" style="left:362.76px;top:455.71px;font-size:8.10px;line-height:9.05px;color:#386fb5;transform:scaleX(0.8450)">29,246</div>
<div class="a tx cv" style="left:403.46px;top:455.71px;font-size:8.10px;line-height:9.05px;color:#386fb5;transform:scaleX(0.8450)">29,246</div>
<div class="a tx cv" style="left:443.86px;top:455.71px;font-size:8.10px;line-height:9.05px;color:#386fb5;transform:scaleX(0.8450)">37,888</div>
<div class="a tx cv" style="left:488.26px;top:455.71px;font-size:8.10px;line-height:9.05px;color:#386fb5;transform:scaleX(0.8450)">37,888</div>
<div class="a tx cv" style="left:532.06px;top:455.71px;font-size:8.10px;line-height:9.05px;color:#386fb5;transform:scaleX(0.8450)">37,888</div>
<div class="a tx cv" style="left:573.06px;top:455.71px;font-size:8.10px;line-height:9.05px;color:#386fb5;transform:scaleX(0.8450)">37,888</div>
<div class="a tx cv" style="left:617.86px;top:455.71px;font-size:8.10px;line-height:9.05px;color:#386fb5;transform:scaleX(0.8450)">37,888</div>
<div class="a tx cv" style="left:660.56px;top:455.71px;font-size:8.10px;line-height:9.05px;color:#386fb5;transform:scaleX(0.8450)">37,888</div>
<div class="a tx cv" style="left:704.86px;top:455.71px;font-size:8.10px;line-height:9.05px;color:#386fb5;transform:scaleX(0.8450)">37,888</div>
<div class="a tx cv" style="left:747.06px;top:455.71px;font-size:8.10px;line-height:9.05px;color:#386fb5;transform:scaleX(0.8450)">37,888</div>
<div class="a tx cv" style="left:792.86px;top:455.71px;font-size:8.10px;line-height:9.05px;color:#386fb5;transform:scaleX(0.8450)">37,888</div>
<div class="a tx cv" style="left:835.66px;top:455.71px;font-size:8.10px;line-height:9.05px;color:#386fb5;transform:scaleX(0.8450)">37,888</div>
<div class="a tx cv" style="left:881.06px;top:455.71px;font-size:8.10px;line-height:9.05px;color:#386fb5;transform:scaleX(0.8450)">37,888</div>
<div class="a tx cv" style="left:921.36px;top:455.71px;font-size:8.10px;line-height:9.05px;color:#386fb5;transform:scaleX(0.8450)">37,888</div>
<div class="a tx cv" style="left:965.86px;top:455.71px;font-size:8.10px;line-height:9.05px;color:#386fb5;transform:scaleX(0.8450)">37,888</div>
<div class="a tx cv" style="left:36.00px;top:466.51px;font-size:8.20px;line-height:9.16px;color:#386fb5;transform:scaleX(0.8944)">Product 16</div>
<div class="a tx cv" style="left:194.56px;top:466.60px;font-size:8.10px;line-height:9.05px;color:#386fb5;transform:scaleX(0.8450)">28,064</div>
<div class="a tx cv" style="left:234.86px;top:466.60px;font-size:8.10px;line-height:9.05px;color:#386fb5;transform:scaleX(0.8450)">28,064</div>
<div class="a tx cv" style="left:275.36px;top:466.60px;font-size:8.10px;line-height:9.05px;color:#386fb5;transform:scaleX(0.8450)">28,064</div>
<div class="a tx cv" style="left:321.06px;top:466.60px;font-size:8.10px;line-height:9.05px;color:#386fb5;transform:scaleX(0.8450)">28,064</div>
<div class="a tx cv" style="left:362.76px;top:466.60px;font-size:8.10px;line-height:9.05px;color:#386fb5;transform:scaleX(0.8450)">28,064</div>
<div class="a tx cv" style="left:403.46px;top:466.60px;font-size:8.10px;line-height:9.05px;color:#386fb5;transform:scaleX(0.8450)">28,064</div>
<div class="a tx cv" style="left:443.86px;top:466.60px;font-size:8.10px;line-height:9.05px;color:#386fb5;transform:scaleX(0.8450)">28,064</div>
<div class="a tx cv" style="left:488.26px;top:466.60px;font-size:8.10px;line-height:9.05px;color:#386fb5;transform:scaleX(0.8450)">28,064</div>
<div class="a tx cv" style="left:532.06px;top:466.60px;font-size:8.10px;line-height:9.05px;color:#386fb5;transform:scaleX(0.8450)">28,064</div>
<div class="a tx cv" style="left:573.06px;top:466.60px;font-size:8.10px;line-height:9.05px;color:#386fb5;transform:scaleX(0.8450)">28,064</div>
<div class="a tx cv" style="left:617.86px;top:466.60px;font-size:8.10px;line-height:9.05px;color:#386fb5;transform:scaleX(0.8450)">28,064</div>
<div class="a tx cv" style="left:660.56px;top:466.60px;font-size:8.10px;line-height:9.05px;color:#386fb5;transform:scaleX(0.8450)">28,064</div>
<div class="a tx cv" style="left:704.86px;top:466.60px;font-size:8.10px;line-height:9.05px;color:#386fb5;transform:scaleX(0.8450)">28,064</div>
<div class="a tx cv" style="left:747.06px;top:466.60px;font-size:8.10px;line-height:9.05px;color:#386fb5;transform:scaleX(0.8450)">28,064</div>
<div class="a tx cv" style="left:792.86px;top:466.60px;font-size:8.10px;line-height:9.05px;color:#386fb5;transform:scaleX(0.8450)">28,064</div>
<div class="a tx cv" style="left:835.66px;top:466.60px;font-size:8.10px;line-height:9.05px;color:#386fb5;transform:scaleX(0.8450)">28,064</div>
<div class="a tx cv" style="left:881.06px;top:466.60px;font-size:8.10px;line-height:9.05px;color:#386fb5;transform:scaleX(0.8450)">28,064</div>
<div class="a tx cv" style="left:921.36px;top:466.60px;font-size:8.10px;line-height:9.05px;color:#386fb5;transform:scaleX(0.8450)">28,064</div>
<div class="a tx cv" style="left:965.86px;top:466.60px;font-size:8.10px;line-height:9.05px;color:#386fb5;transform:scaleX(0.8450)">28,064</div>
<div class="a tx cv" style="left:36.00px;top:477.40px;font-size:8.20px;line-height:9.16px;color:#386fb5;transform:scaleX(0.8944)">Product 17</div>
<div class="a tx cv" style="left:194.56px;top:477.49px;font-size:8.10px;line-height:9.05px;color:#386fb5;transform:scaleX(0.8450)">42,096</div>
<div class="a tx cv" style="left:234.86px;top:477.49px;font-size:8.10px;line-height:9.05px;color:#386fb5;transform:scaleX(0.8450)">42,096</div>
<div class="a tx cv" style="left:275.36px;top:477.49px;font-size:8.10px;line-height:9.05px;color:#386fb5;transform:scaleX(0.8450)">42,096</div>
<div class="a tx cv" style="left:321.06px;top:477.49px;font-size:8.10px;line-height:9.05px;color:#386fb5;transform:scaleX(0.8450)">42,096</div>
<div class="a tx cv" style="left:362.76px;top:477.49px;font-size:8.10px;line-height:9.05px;color:#386fb5;transform:scaleX(0.8450)">42,096</div>
<div class="a tx cv" style="left:403.46px;top:477.49px;font-size:8.10px;line-height:9.05px;color:#386fb5;transform:scaleX(0.8450)">42,096</div>
<div class="a tx cv" style="left:443.86px;top:477.49px;font-size:8.10px;line-height:9.05px;color:#386fb5;transform:scaleX(0.8450)">42,096</div>
<div class="a tx cv" style="left:488.26px;top:477.49px;font-size:8.10px;line-height:9.05px;color:#386fb5;transform:scaleX(0.8450)">42,096</div>
<div class="a tx cv" style="left:532.06px;top:477.49px;font-size:8.10px;line-height:9.05px;color:#386fb5;transform:scaleX(0.8450)">42,096</div>
<div class="a tx cv" style="left:573.06px;top:477.49px;font-size:8.10px;line-height:9.05px;color:#386fb5;transform:scaleX(0.8450)">42,096</div>
<div class="a tx cv" style="left:617.86px;top:477.49px;font-size:8.10px;line-height:9.05px;color:#386fb5;transform:scaleX(0.8450)">42,096</div>
<div class="a tx cv" style="left:660.56px;top:477.49px;font-size:8.10px;line-height:9.05px;color:#386fb5;transform:scaleX(0.8450)">42,096</div>
<div class="a tx cv" style="left:704.86px;top:477.49px;font-size:8.10px;line-height:9.05px;color:#386fb5;transform:scaleX(0.8450)">42,096</div>
<div class="a tx cv" style="left:747.06px;top:477.49px;font-size:8.10px;line-height:9.05px;color:#386fb5;transform:scaleX(0.8450)">42,096</div>
<div class="a tx cv" style="left:792.86px;top:477.49px;font-size:8.10px;line-height:9.05px;color:#386fb5;transform:scaleX(0.8450)">42,096</div>
<div class="a tx cv" style="left:835.66px;top:477.49px;font-size:8.10px;line-height:9.05px;color:#386fb5;transform:scaleX(0.8450)">42,096</div>
<div class="a tx cv" style="left:881.06px;top:477.49px;font-size:8.10px;line-height:9.05px;color:#386fb5;transform:scaleX(0.8450)">42,096</div>
<div class="a tx cv" style="left:921.36px;top:477.49px;font-size:8.10px;line-height:9.05px;color:#386fb5;transform:scaleX(0.8450)">42,096</div>
<div class="a tx cv" style="left:965.86px;top:477.49px;font-size:8.10px;line-height:9.05px;color:#386fb5;transform:scaleX(0.8450)">42,096</div>
<div class="a tx cv" style="left:36.00px;top:488.29px;font-size:8.20px;line-height:9.16px;color:#386fb5;transform:scaleX(0.8944)">Product 18</div>
<div class="a tx cv" style="left:194.56px;top:488.38px;font-size:8.10px;line-height:9.05px;color:#386fb5;transform:scaleX(0.8450)">53,322</div>
<div class="a tx cv" style="left:234.86px;top:488.38px;font-size:8.10px;line-height:9.05px;color:#386fb5;transform:scaleX(0.8450)">53,322</div>
<div class="a tx cv" style="left:275.36px;top:488.38px;font-size:8.10px;line-height:9.05px;color:#386fb5;transform:scaleX(0.8450)">53,322</div>
<div class="a tx cv" style="left:321.06px;top:488.38px;font-size:8.10px;line-height:9.05px;color:#386fb5;transform:scaleX(0.8450)">53,322</div>
<div class="a tx cv" style="left:362.76px;top:488.38px;font-size:8.10px;line-height:9.05px;color:#386fb5;transform:scaleX(0.8450)">53,322</div>
<div class="a tx cv" style="left:403.46px;top:488.38px;font-size:8.10px;line-height:9.05px;color:#386fb5;transform:scaleX(0.8450)">53,322</div>
<div class="a tx cv" style="left:443.86px;top:488.38px;font-size:8.10px;line-height:9.05px;color:#386fb5;transform:scaleX(0.8450)">53,322</div>
<div class="a tx cv" style="left:488.26px;top:488.38px;font-size:8.10px;line-height:9.05px;color:#386fb5;transform:scaleX(0.8450)">53,322</div>
<div class="a tx cv" style="left:532.06px;top:488.38px;font-size:8.10px;line-height:9.05px;color:#386fb5;transform:scaleX(0.8450)">53,322</div>
<div class="a tx cv" style="left:573.06px;top:488.38px;font-size:8.10px;line-height:9.05px;color:#386fb5;transform:scaleX(0.8450)">53,322</div>
<div class="a tx cv" style="left:617.86px;top:488.38px;font-size:8.10px;line-height:9.05px;color:#386fb5;transform:scaleX(0.8450)">53,322</div>
<div class="a tx cv" style="left:660.56px;top:488.38px;font-size:8.10px;line-height:9.05px;color:#386fb5;transform:scaleX(0.8450)">53,322</div>
<div class="a tx cv" style="left:704.86px;top:488.38px;font-size:8.10px;line-height:9.05px;color:#386fb5;transform:scaleX(0.8450)">53,322</div>
<div class="a tx cv" style="left:747.06px;top:488.38px;font-size:8.10px;line-height:9.05px;color:#386fb5;transform:scaleX(0.8450)">53,322</div>
<div class="a tx cv" style="left:792.86px;top:488.38px;font-size:8.10px;line-height:9.05px;color:#386fb5;transform:scaleX(0.8450)">53,322</div>
<div class="a tx cv" style="left:835.66px;top:488.38px;font-size:8.10px;line-height:9.05px;color:#386fb5;transform:scaleX(0.8450)">53,322</div>
<div class="a tx cv" style="left:881.06px;top:488.38px;font-size:8.10px;line-height:9.05px;color:#386fb5;transform:scaleX(0.8450)">53,322</div>
<div class="a tx cv" style="left:921.36px;top:488.38px;font-size:8.10px;line-height:9.05px;color:#386fb5;transform:scaleX(0.8450)">53,322</div>
<div class="a tx cv" style="left:965.86px;top:488.38px;font-size:8.10px;line-height:9.05px;color:#386fb5;transform:scaleX(0.8450)">53,322</div>
<div class="a tx cv" style="left:36.00px;top:499.18px;font-size:8.20px;line-height:9.16px;color:#386fb5;transform:scaleX(0.8944)">Product 19</div>
<div class="a tx cv" style="left:194.56px;top:499.27px;font-size:8.10px;line-height:9.05px;color:#386fb5;transform:scaleX(0.8450)">38,808</div>
<div class="a tx cv" style="left:234.86px;top:499.27px;font-size:8.10px;line-height:9.05px;color:#386fb5;transform:scaleX(0.8450)">38,808</div>
<div class="a tx cv" style="left:275.36px;top:499.27px;font-size:8.10px;line-height:9.05px;color:#386fb5;transform:scaleX(0.8450)">38,808</div>
<div class="a tx cv" style="left:321.06px;top:499.27px;font-size:8.10px;line-height:9.05px;color:#386fb5;transform:scaleX(0.8450)">38,808</div>
<div class="a tx cv" style="left:362.76px;top:499.27px;font-size:8.10px;line-height:9.05px;color:#386fb5;transform:scaleX(0.8450)">41,160</div>
<div class="a tx cv" style="left:403.46px;top:499.27px;font-size:8.10px;line-height:9.05px;color:#386fb5;transform:scaleX(0.8450)">41,160</div>
<div class="a tx cv" style="left:443.86px;top:499.27px;font-size:8.10px;line-height:9.05px;color:#386fb5;transform:scaleX(0.8450)">41,160</div>
<div class="a tx cv" style="left:488.26px;top:499.27px;font-size:8.10px;line-height:9.05px;color:#386fb5;transform:scaleX(0.8450)">41,160</div>
<div class="a tx cv" style="left:532.06px;top:499.27px;font-size:8.10px;line-height:9.05px;color:#386fb5;transform:scaleX(0.8450)">41,160</div>
<div class="a tx cv" style="left:573.06px;top:499.27px;font-size:8.10px;line-height:9.05px;color:#386fb5;transform:scaleX(0.8450)">41,160</div>
<div class="a tx cv" style="left:617.86px;top:499.27px;font-size:8.10px;line-height:9.05px;color:#386fb5;transform:scaleX(0.8450)">41,160</div>
<div class="a tx cv" style="left:660.56px;top:499.27px;font-size:8.10px;line-height:9.05px;color:#386fb5;transform:scaleX(0.8450)">41,160</div>
<div class="a tx cv" style="left:704.86px;top:499.27px;font-size:8.10px;line-height:9.05px;color:#386fb5;transform:scaleX(0.8450)">41,160</div>
<div class="a tx cv" style="left:747.06px;top:499.27px;font-size:8.10px;line-height:9.05px;color:#386fb5;transform:scaleX(0.8450)">41,160</div>
<div class="a tx cv" style="left:792.86px;top:499.27px;font-size:8.10px;line-height:9.05px;color:#386fb5;transform:scaleX(0.8450)">41,160</div>
<div class="a tx cv" style="left:835.66px;top:499.27px;font-size:8.10px;line-height:9.05px;color:#386fb5;transform:scaleX(0.8450)">41,160</div>
<div class="a tx cv" style="left:881.06px;top:499.27px;font-size:8.10px;line-height:9.05px;color:#386fb5;transform:scaleX(0.8450)">41,160</div>
<div class="a tx cv" style="left:921.36px;top:499.27px;font-size:8.10px;line-height:9.05px;color:#386fb5;transform:scaleX(0.8450)">41,160</div>
<div class="a tx cv" style="left:965.86px;top:499.27px;font-size:8.10px;line-height:9.05px;color:#386fb5;transform:scaleX(0.8450)">41,160</div>
<div class="a tx cv" style="left:36.00px;top:510.07px;font-size:8.20px;line-height:9.16px;color:#386fb5;transform:scaleX(0.8944)">Product 20</div>
<div class="a tx cv" style="left:194.56px;top:510.16px;font-size:8.10px;line-height:9.05px;color:#386fb5;transform:scaleX(0.8450)">21,312</div>
<div class="a tx cv" style="left:234.86px;top:510.16px;font-size:8.10px;line-height:9.05px;color:#386fb5;transform:scaleX(0.8450)">21,312</div>
<div class="a tx cv" style="left:275.36px;top:510.16px;font-size:8.10px;line-height:9.05px;color:#386fb5;transform:scaleX(0.8450)">21,312</div>
<div class="a tx cv" style="left:321.06px;top:510.16px;font-size:8.10px;line-height:9.05px;color:#386fb5;transform:scaleX(0.8450)">21,312</div>
<div class="a tx cv" style="left:362.76px;top:510.16px;font-size:8.10px;line-height:9.05px;color:#386fb5;transform:scaleX(0.8450)">21,312</div>
<div class="a tx cv" style="left:403.46px;top:510.16px;font-size:8.10px;line-height:9.05px;color:#386fb5;transform:scaleX(0.8450)">21,312</div>
<div class="a tx cv" style="left:443.86px;top:510.16px;font-size:8.10px;line-height:9.05px;color:#386fb5;transform:scaleX(0.8450)">21,312</div>
<div class="a tx cv" style="left:488.26px;top:510.16px;font-size:8.10px;line-height:9.05px;color:#386fb5;transform:scaleX(0.8450)">21,312</div>
<div class="a tx cv" style="left:532.06px;top:510.16px;font-size:8.10px;line-height:9.05px;color:#386fb5;transform:scaleX(0.8450)">21,312</div>
<div class="a tx cv" style="left:573.06px;top:510.16px;font-size:8.10px;line-height:9.05px;color:#386fb5;transform:scaleX(0.8450)">21,312</div>
<div class="a tx cv" style="left:617.86px;top:510.16px;font-size:8.10px;line-height:9.05px;color:#386fb5;transform:scaleX(0.8450)">21,312</div>
<div class="a tx cv" style="left:660.56px;top:510.16px;font-size:8.10px;line-height:9.05px;color:#386fb5;transform:scaleX(0.8450)">21,312</div>
<div class="a tx cv" style="left:704.86px;top:510.16px;font-size:8.10px;line-height:9.05px;color:#386fb5;transform:scaleX(0.8450)">21,312</div>
<div class="a tx cv" style="left:747.06px;top:510.16px;font-size:8.10px;line-height:9.05px;color:#386fb5;transform:scaleX(0.8450)">21,312</div>
<div class="a tx cv" style="left:792.86px;top:510.16px;font-size:8.10px;line-height:9.05px;color:#386fb5;transform:scaleX(0.8450)">21,312</div>
<div class="a tx cv" style="left:835.66px;top:510.16px;font-size:8.10px;line-height:9.05px;color:#386fb5;transform:scaleX(0.8450)">21,312</div>
<div class="a tx cv" style="left:881.06px;top:510.16px;font-size:8.10px;line-height:9.05px;color:#386fb5;transform:scaleX(0.8450)">21,312</div>
<div class="a tx cv" style="left:921.36px;top:510.16px;font-size:8.10px;line-height:9.05px;color:#386fb5;transform:scaleX(0.8450)">21,312</div>
<div class="a tx cv" style="left:965.86px;top:510.16px;font-size:8.10px;line-height:9.05px;color:#386fb5;transform:scaleX(0.8450)">21,312</div>
<div class="a tx cv" style="left:36.00px;top:520.96px;font-size:8.20px;line-height:9.16px;color:#386fb5;transform:scaleX(0.8944)">Product 21</div>
<div class="a tx cv" style="left:194.56px;top:521.05px;font-size:8.10px;line-height:9.05px;color:#386fb5;transform:scaleX(0.8450)">10,656</div>
<div class="a tx cv" style="left:234.86px;top:521.05px;font-size:8.10px;line-height:9.05px;color:#386fb5;transform:scaleX(0.8450)">10,656</div>
<div class="a tx cv" style="left:275.36px;top:521.05px;font-size:8.10px;line-height:9.05px;color:#386fb5;transform:scaleX(0.8450)">10,656</div>
<div class="a tx cv" style="left:321.06px;top:521.05px;font-size:8.10px;line-height:9.05px;color:#386fb5;transform:scaleX(0.8450)">10,656</div>
<div class="a tx cv" style="left:363.27px;top:521.05px;font-size:8.10px;line-height:9.05px;color:#386fb5;transform:scaleX(0.8450)">11,722</div>
<div class="a tx cv" style="left:403.97px;top:521.05px;font-size:8.10px;line-height:9.05px;color:#386fb5;transform:scaleX(0.8450)">11,722</div>
<div class="a tx cv" style="left:444.37px;top:521.05px;font-size:8.10px;line-height:9.05px;color:#386fb5;transform:scaleX(0.8450)">11,722</div>
<div class="a tx cv" style="left:488.77px;top:521.05px;font-size:8.10px;line-height:9.05px;color:#386fb5;transform:scaleX(0.8450)">11,722</div>
<div class="a tx cv" style="left:532.57px;top:521.05px;font-size:8.10px;line-height:9.05px;color:#386fb5;transform:scaleX(0.8450)">11,722</div>
<div class="a tx cv" style="left:573.57px;top:521.05px;font-size:8.10px;line-height:9.05px;color:#386fb5;transform:scaleX(0.8450)">11,722</div>
<div class="a tx cv" style="left:618.37px;top:521.05px;font-size:8.10px;line-height:9.05px;color:#386fb5;transform:scaleX(0.8450)">11,722</div>
<div class="a tx cv" style="left:661.07px;top:521.05px;font-size:8.10px;line-height:9.05px;color:#386fb5;transform:scaleX(0.8450)">11,722</div>
<div class="a tx cv" style="left:705.37px;top:521.05px;font-size:8.10px;line-height:9.05px;color:#386fb5;transform:scaleX(0.8450)">11,722</div>
<div class="a tx cv" style="left:747.57px;top:521.05px;font-size:8.10px;line-height:9.05px;color:#386fb5;transform:scaleX(0.8450)">11,722</div>
<div class="a tx cv" style="left:793.37px;top:521.05px;font-size:8.10px;line-height:9.05px;color:#386fb5;transform:scaleX(0.8450)">11,722</div>
<div class="a tx cv" style="left:836.17px;top:521.05px;font-size:8.10px;line-height:9.05px;color:#386fb5;transform:scaleX(0.8450)">11,722</div>
<div class="a tx cv" style="left:881.06px;top:521.05px;font-size:8.10px;line-height:9.05px;color:#386fb5;transform:scaleX(0.8450)">12,787</div>
<div class="a tx cv" style="left:921.36px;top:521.05px;font-size:8.10px;line-height:9.05px;color:#386fb5;transform:scaleX(0.8450)">12,787</div>
<div class="a tx cv" style="left:965.86px;top:521.05px;font-size:8.10px;line-height:9.05px;color:#386fb5;transform:scaleX(0.8450)">12,787</div>
<div class="a tx cv" style="left:36.00px;top:531.85px;font-size:8.20px;line-height:9.16px;color:#386fb5;transform:scaleX(0.8944)">Product 22</div>
<div class="a tx cv" style="left:194.56px;top:531.94px;font-size:8.10px;line-height:9.05px;color:#386fb5;transform:scaleX(0.8450)">12,787</div>
<div class="a tx cv" style="left:234.86px;top:531.94px;font-size:8.10px;line-height:9.05px;color:#386fb5;transform:scaleX(0.8450)">12,787</div>
<div class="a tx cv" style="left:275.36px;top:531.94px;font-size:8.10px;line-height:9.05px;color:#386fb5;transform:scaleX(0.8450)">12,787</div>
<div class="a tx cv" style="left:321.06px;top:531.94px;font-size:8.10px;line-height:9.05px;color:#386fb5;transform:scaleX(0.8450)">12,787</div>
<div class="a tx cv" style="left:362.76px;top:531.94px;font-size:8.10px;line-height:9.05px;color:#386fb5;transform:scaleX(0.8450)">13,853</div>
<div class="a tx cv" style="left:403.46px;top:531.94px;font-size:8.10px;line-height:9.05px;color:#386fb5;transform:scaleX(0.8450)">13,853</div>
<div class="a tx cv" style="left:443.86px;top:531.94px;font-size:8.10px;line-height:9.05px;color:#386fb5;transform:scaleX(0.8450)">13,853</div>
<div class="a tx cv" style="left:488.26px;top:531.94px;font-size:8.10px;line-height:9.05px;color:#386fb5;transform:scaleX(0.8450)">13,853</div>
<div class="a tx cv" style="left:532.06px;top:531.94px;font-size:8.10px;line-height:9.05px;color:#386fb5;transform:scaleX(0.8450)">13,853</div>
<div class="a tx cv" style="left:573.06px;top:531.94px;font-size:8.10px;line-height:9.05px;color:#386fb5;transform:scaleX(0.8450)">13,853</div>
<div class="a tx cv" style="left:617.86px;top:531.94px;font-size:8.10px;line-height:9.05px;color:#386fb5;transform:scaleX(0.8450)">13,853</div>
<div class="a tx cv" style="left:660.56px;top:531.94px;font-size:8.10px;line-height:9.05px;color:#386fb5;transform:scaleX(0.8450)">13,853</div>
<div class="a tx cv" style="left:704.86px;top:531.94px;font-size:8.10px;line-height:9.05px;color:#386fb5;transform:scaleX(0.8450)">13,853</div>
<div class="a tx cv" style="left:747.06px;top:531.94px;font-size:8.10px;line-height:9.05px;color:#386fb5;transform:scaleX(0.8450)">13,853</div>
<div class="a tx cv" style="left:792.86px;top:531.94px;font-size:8.10px;line-height:9.05px;color:#386fb5;transform:scaleX(0.8450)">13,853</div>
<div class="a tx cv" style="left:835.66px;top:531.94px;font-size:8.10px;line-height:9.05px;color:#386fb5;transform:scaleX(0.8450)">13,853</div>
<div class="a tx cv" style="left:881.06px;top:531.94px;font-size:8.10px;line-height:9.05px;color:#386fb5;transform:scaleX(0.8450)">13,853</div>
<div class="a tx cv" style="left:921.36px;top:531.94px;font-size:8.10px;line-height:9.05px;color:#386fb5;transform:scaleX(0.8450)">13,853</div>
<div class="a tx cv" style="left:965.86px;top:531.94px;font-size:8.10px;line-height:9.05px;color:#386fb5;transform:scaleX(0.8450)">13,853</div>
<div class="a tx cv" style="left:36.00px;top:542.74px;font-size:8.20px;line-height:9.16px;color:#386fb5;transform:scaleX(0.8944)">Product 23</div>
<div class="a tx cv" style="left:194.56px;top:542.83px;font-size:8.10px;line-height:9.05px;color:#386fb5;transform:scaleX(0.8450)">21,312</div>
<div class="a tx cv" style="left:234.86px;top:542.83px;font-size:8.10px;line-height:9.05px;color:#386fb5;transform:scaleX(0.8450)">21,312</div>
<div class="a tx cv" style="left:275.36px;top:542.83px;font-size:8.10px;line-height:9.05px;color:#386fb5;transform:scaleX(0.8450)">21,312</div>
<div class="a tx cv" style="left:321.06px;top:542.83px;font-size:8.10px;line-height:9.05px;color:#386fb5;transform:scaleX(0.8450)">21,312</div>
<div class="a tx cv" style="left:362.76px;top:542.83px;font-size:8.10px;line-height:9.05px;color:#386fb5;transform:scaleX(0.8450)">23,443</div>
<div class="a tx cv" style="left:403.46px;top:542.83px;font-size:8.10px;line-height:9.05px;color:#386fb5;transform:scaleX(0.8450)">23,443</div>
<div class="a tx cv" style="left:443.86px;top:542.83px;font-size:8.10px;line-height:9.05px;color:#386fb5;transform:scaleX(0.8450)">23,443</div>
<div class="a tx cv" style="left:488.26px;top:542.83px;font-size:8.10px;line-height:9.05px;color:#386fb5;transform:scaleX(0.8450)">23,443</div>
<div class="a tx cv" style="left:532.06px;top:542.83px;font-size:8.10px;line-height:9.05px;color:#386fb5;transform:scaleX(0.8450)">23,443</div>
<div class="a tx cv" style="left:573.06px;top:542.83px;font-size:8.10px;line-height:9.05px;color:#386fb5;transform:scaleX(0.8450)">23,443</div>
<div class="a tx cv" style="left:617.86px;top:542.83px;font-size:8.10px;line-height:9.05px;color:#386fb5;transform:scaleX(0.8450)">23,443</div>
<div class="a tx cv" style="left:660.56px;top:542.83px;font-size:8.10px;line-height:9.05px;color:#386fb5;transform:scaleX(0.8450)">23,443</div>
<div class="a tx cv" style="left:704.86px;top:542.83px;font-size:8.10px;line-height:9.05px;color:#386fb5;transform:scaleX(0.8450)">23,443</div>
<div class="a tx cv" style="left:747.06px;top:542.83px;font-size:8.10px;line-height:9.05px;color:#386fb5;transform:scaleX(0.8450)">23,443</div>
<div class="a tx cv" style="left:792.86px;top:542.83px;font-size:8.10px;line-height:9.05px;color:#386fb5;transform:scaleX(0.8450)">23,443</div>
<div class="a tx cv" style="left:835.66px;top:542.83px;font-size:8.10px;line-height:9.05px;color:#386fb5;transform:scaleX(0.8450)">23,443</div>
<div class="a tx cv" style="left:881.06px;top:542.83px;font-size:8.10px;line-height:9.05px;color:#386fb5;transform:scaleX(0.8450)">21,312</div>
<div class="a tx cv" style="left:921.36px;top:542.83px;font-size:8.10px;line-height:9.05px;color:#386fb5;transform:scaleX(0.8450)">21,312</div>
<div class="a tx cv" style="left:965.86px;top:542.83px;font-size:8.10px;line-height:9.05px;color:#386fb5;transform:scaleX(0.8450)">21,312</div>
<div class="a tx cv" style="left:36.00px;top:553.63px;font-size:8.20px;line-height:9.16px;color:#386fb5;transform:scaleX(0.8944)">Product 24</div>
<div class="a tx cv" style="left:194.56px;top:553.72px;font-size:8.10px;line-height:9.05px;color:#386fb5;transform:scaleX(0.8450)">26,640</div>
<div class="a tx cv" style="left:234.86px;top:553.72px;font-size:8.10px;line-height:9.05px;color:#386fb5;transform:scaleX(0.8450)">26,640</div>
<div class="a tx cv" style="left:275.36px;top:553.72px;font-size:8.10px;line-height:9.05px;color:#386fb5;transform:scaleX(0.8450)">26,640</div>
<div class="a tx cv" style="left:321.06px;top:553.72px;font-size:8.10px;line-height:9.05px;color:#386fb5;transform:scaleX(0.8450)">26,640</div>
<div class="a tx cv" style="left:362.76px;top:553.72px;font-size:8.10px;line-height:9.05px;color:#386fb5;transform:scaleX(0.8450)">28,771</div>
<div class="a tx cv" style="left:403.46px;top:553.72px;font-size:8.10px;line-height:9.05px;color:#386fb5;transform:scaleX(0.8450)">28,771</div>
<div class="a tx cv" style="left:443.86px;top:553.72px;font-size:8.10px;line-height:9.05px;color:#386fb5;transform:scaleX(0.8450)">28,771</div>
<div class="a tx cv" style="left:488.26px;top:553.72px;font-size:8.10px;line-height:9.05px;color:#386fb5;transform:scaleX(0.8450)">28,771</div>
<div class="a tx cv" style="left:532.06px;top:553.72px;font-size:8.10px;line-height:9.05px;color:#386fb5;transform:scaleX(0.8450)">28,771</div>
<div class="a tx cv" style="left:573.06px;top:553.72px;font-size:8.10px;line-height:9.05px;color:#386fb5;transform:scaleX(0.8450)">28,771</div>
<div class="a tx cv" style="left:617.86px;top:553.72px;font-size:8.10px;line-height:9.05px;color:#386fb5;transform:scaleX(0.8450)">28,771</div>
<div class="a tx cv" style="left:660.56px;top:553.72px;font-size:8.10px;line-height:9.05px;color:#386fb5;transform:scaleX(0.8450)">28,771</div>
<div class="a tx cv" style="left:704.86px;top:553.72px;font-size:8.10px;line-height:9.05px;color:#386fb5;transform:scaleX(0.8450)">28,771</div>
<div class="a tx cv" style="left:747.06px;top:553.72px;font-size:8.10px;line-height:9.05px;color:#386fb5;transform:scaleX(0.8450)">28,771</div>
<div class="a tx cv" style="left:792.86px;top:553.72px;font-size:8.10px;line-height:9.05px;color:#386fb5;transform:scaleX(0.8450)">28,771</div>
<div class="a tx cv" style="left:835.66px;top:553.72px;font-size:8.10px;line-height:9.05px;color:#386fb5;transform:scaleX(0.8450)">28,771</div>
<div class="a tx cv" style="left:881.06px;top:553.72px;font-size:8.10px;line-height:9.05px;color:#386fb5;transform:scaleX(0.8450)">28,771</div>
<div class="a tx cv" style="left:921.36px;top:553.72px;font-size:8.10px;line-height:9.05px;color:#386fb5;transform:scaleX(0.8450)">28,771</div>
<div class="a tx cv" style="left:965.86px;top:553.72px;font-size:8.10px;line-height:9.05px;color:#386fb5;transform:scaleX(0.8450)">28,771</div>
<svg class="a" style="left:0;top:0" width="1000" height="591" viewBox="0 0 1000 591"><path d="M188.2 312.9 L154.6 353.9 L129.8 370.4 L155.8 337.6 L64.8 399.6 L61.3 395.7 L152 334.2 L112.7 345.6 L136.8 329.7 Z" fill="#474747" stroke="rgba(255,255,255,0.55)" stroke-width="2" stroke-linejoin="round" paint-order="stroke"/></svg>
<div class="a tx big" style="left:114.40px;top:452.66px;font-size:33.30px;line-height:37.20px;color:#464646;transform:scaleX(1.1217);font-weight:bold">View</div>
<div class="a tx big" style="left:209.70px;top:452.66px;font-size:33.30px;line-height:37.20px;color:#464646;transform:scaleX(1.0845);font-weight:bold">revenue</div>
<div class="a tx big" style="left:359.00px;top:452.66px;font-size:33.30px;line-height:37.20px;color:#464646;transform:scaleX(1.0739);font-weight:bold">totals</div>
<div class="a tx big" style="left:468.50px;top:452.66px;font-size:33.30px;line-height:37.20px;color:#464646;transform:scaleX(1.0235);font-weight:bold">for</div>
<div class="a tx big" style="left:527.50px;top:452.66px;font-size:33.30px;line-height:37.20px;color:#464646;transform:scaleX(0.8224);font-weight:bold">all</div>
<div class="a tx big" style="left:571.00px;top:452.66px;font-size:33.30px;line-height:37.20px;color:#464646;transform:scaleX(0.9779);font-weight:bold">your</div>
<div class="a tx big" style="left:654.80px;top:452.66px;font-size:33.30px;line-height:37.20px;color:#464646;transform:scaleX(1.1338);font-weight:bold">products</div>
<div id="tabbar" class="a"></div>
<svg class="a" style="left:17px;top:566px" width="5" height="7" viewBox="0 0 5 7"><path d="M4 0.5 L1 3.5 L4 6.5" fill="none" stroke="#c4c4c4" stroke-width="1"/></svg>
<svg class="a" style="left:38px;top:566px" width="5" height="7" viewBox="0 0 5 7"><path d="M1 0.5 L4 3.5 L1 6.5" fill="none" stroke="#555" stroke-width="1"/></svg>
<div class="a" style="left:121px;top:559px;width:38px;height:18.5px;background:#fff"></div>
<div class="a" style="left:126.5px;top:574.5px;width:26px;height:1.5px;background:#1e7145"></div>
<div class="a tx " style="left:78.90px;top:563.95px;font-size:10.00px;line-height:11.17px;color:#3a3a3a;transform:scaleX(0.9502)">How To</div>
<div class="a tx " style="left:127.00px;top:563.25px;font-size:10.00px;line-height:11.17px;color:#222;transform:scaleX(0.8333);font-weight:bold">Inputs</div>
<div class="a tx " style="left:169.00px;top:563.95px;font-size:10.00px;line-height:11.17px;color:#3a3a3a;transform:scaleX(0.9268)">2025 Accounts</div>
<div class="a tx " style="left:247.30px;top:563.95px;font-size:10.00px;line-height:11.17px;color:#3a3a3a;transform:scaleX(0.8794)">2025 MRR Dashboard</div>
<div class="a tx " style="left:353.00px;top:563.95px;font-size:10.00px;line-height:11.17px;color:#3a3a3a;transform:scaleX(0.8418)">IS 2025</div>
<div class="a tx " style="left:399.00px;top:563.95px;font-size:10.00px;line-height:11.17px;color:#3a3a3a;transform:scaleX(0.8344)">CF 2025</div>
<div class="a tx " style="left:448.00px;top:563.95px;font-size:10.00px;line-height:11.17px;color:#3a3a3a;transform:scaleX(0.8553)">BS 2025</div>
<div class="a tx " style="left:499.00px;top:563.95px;font-size:10.00px;line-height:11.17px;color:#3a3a3a;transform:scaleX(0.8832)">Statements Summary 2025</div>
<div class="a tx " style="left:625.00px;top:563.95px;font-size:10.00px;line-height:11.17px;color:#3a3a3a;transform:scaleX(0.8142)">CAPEX 2025</div>
<div class="a tx " style="left:691.80px;top:563.95px;font-size:10.00px;line-height:11.17px;color:#3a3a3a;transform:scaleX(0.8674)">Sales Summary Charts 2025</div>
<div class="a tx " style="left:822.50px;top:563.95px;font-size:10.00px;line-height:11.17px;color:#3a3a3a;transform:scaleX(0.8765)">2026 Accounts</div>
<svg class="a" style="left:885px;top:567px" width="10" height="4" viewBox="0 0 10 4"><circle cx="1.7" cy="2" r="1.1" fill="#333"/><circle cx="5" cy="2" r="1.1" fill="#333"/><circle cx="8.3" cy="2" r="1.1" fill="#333"/></svg>
<svg class="a" style="left:907px;top:565px" width="9" height="9" viewBox="0 0 9 9"><path d="M4.5 0.5 V8.5 M0.5 4.5 H8.5" stroke="#333" stroke-width="1.1"/></svg>
<div class="a" style="left:931px;top:563px;width:2px;height:11px;background:radial-gradient(circle,#444 45%,transparent 50%) 0 0/2px 4px repeat-y"></div>
<svg class="a" style="left:945px;top:566px" width="5" height="7" viewBox="0 0 5 7"><path d="M4.5 0 L0.5 3.5 L4.5 7 Z" fill="#333"/></svg>
<div class="a" style="left:953px;top:566.5px;width:12px;height:6px;border-radius:3px;background:#555"></div>
<svg class="a" style="left:980px;top:566px" width="5" height="7" viewBox="0 0 5 7"><path d="M0.5 0 L4.5 3.5 L0.5 7 Z" fill="#333"/></svg>
<div id="status" class="a"></div>
<div class="a" style="left:810px;top:580px;width:20px;height:11px;background:#e3e3e3"></div>
<div class="a tx " style="left:7.00px;top:583.24px;font-size:7.80px;line-height:8.71px;color:#555;transform:scaleX(0.8429)">Ready</div>
<svg class="a" style="left:38.5px;top:582px" width="10" height="9" viewBox="0 0 10 9"><rect x="0.5" y="0.5" width="9" height="8" fill="none" stroke="#555" stroke-width="1"/><path d="M2 2.5 H8 M2 4.5 H8 M2 6.5 H8 M3.5 1 V8 M6.5 1 V8" stroke="#777" stroke-width="0.8"/></svg>
<svg class="a" style="left:60px;top:582px" width="9" height="9" viewBox="0 0 9 9"><path d="M1 1 L8 1 L4.5 4.5 Z M4.5 4.5 L2 8.5 M4.5 4.5 L7 8.5" fill="none" stroke="#444" stroke-width="0.9"/><circle cx="4.5" cy="1" r="0.8" fill="#444"/></svg>
<div class="a tx " style="left:72.00px;top:583.24px;font-size:7.80px;line-height:8.71px;color:#222;transform:scaleX(0.8368);font-weight:bold">Accessibility: Investigate</div>
<svg class="a" style="left:814px;top:582.5px" width="11" height="9" viewBox="0 0 11 9"><rect x="0.5" y="0.5" width="10" height="8" fill="none" stroke="#333" stroke-width="1"/><path d="M0.5 3.2 H10.5 M0.5 5.8 H10.5 M3.8 0.5 V8.5 M7.2 0.5 V8.5" stroke="#333" stroke-width="0.8"/></svg>
<svg class="a" style="left:840px;top:582.5px" width="11" height="9" viewBox="0 0 11 9"><rect x="0.5" y="0.5" width="10" height="8" fill="none" stroke="#333" stroke-width="1"/><path d="M3 0.5 V8.5 M8 0.5 V8.5" stroke="#333" stroke-width="0.9"/></svg>
<svg class="a" style="left:866px;top:582.5px" width="11" height="9" viewBox="0 0 11 9"><rect x="0.5" y="0.5" width="10" height="8" fill="none" stroke="#333" stroke-width="1"/><path d="M0.5 4.5 H10.5 M5.5 0.5 V4.5" stroke="#333" stroke-width="0.9"/></svg>
<div class="a" style="left:889px;top:586px;width:4px;height:1px;background:#555"></div>
<div class="a" style="left:895px;top:586px;width:70px;height:1px;background:#888"></div>
<div class="a" style="left:924px;top:582px;width:2px;height:8px;background:#444"></div>
<div class="a" style="left:965px;top:583px;font-size:8px;color:#444;line-height:7px">+</div>
<div class="a tx " style="left:978.70px;top:583.21px;font-size:7.50px;line-height:8.38px;color:#444;transform:scaleX(0.8200)">87%</div>
</body></html>
